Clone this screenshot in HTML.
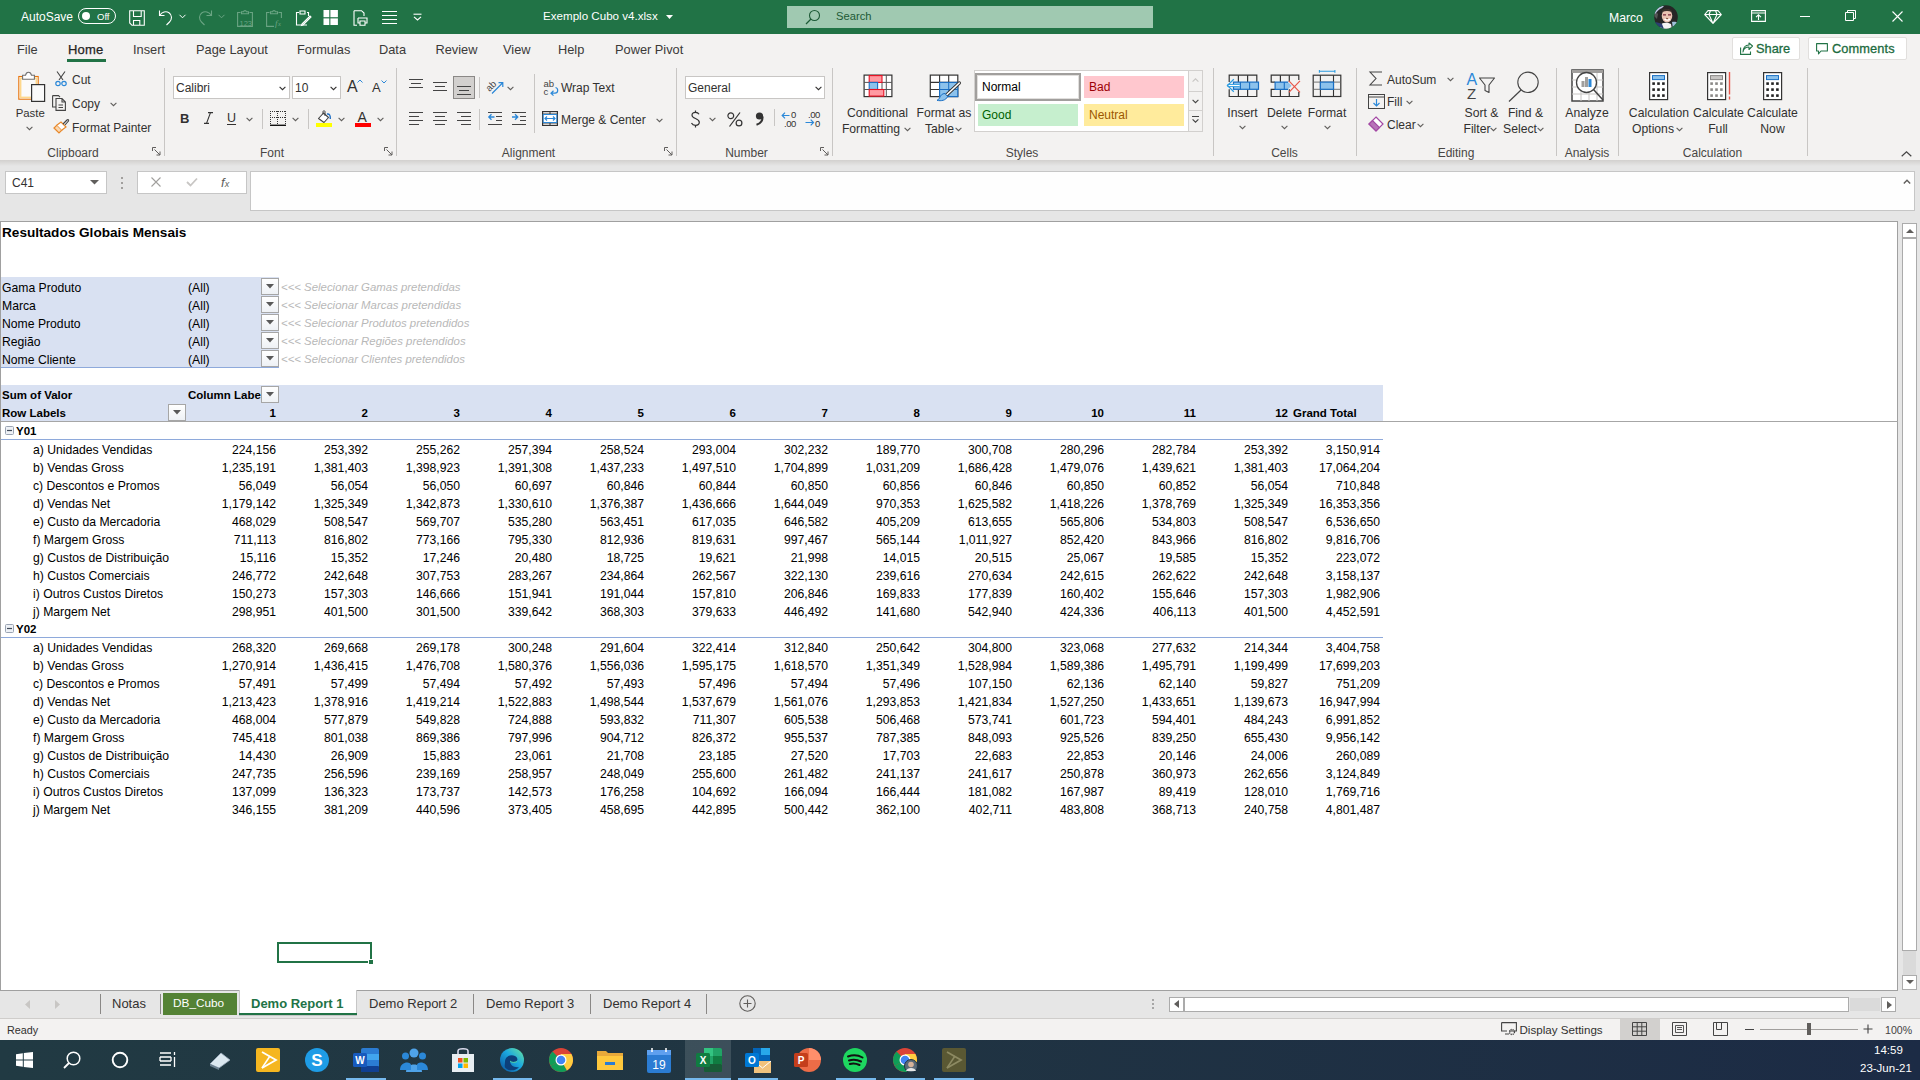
<!DOCTYPE html>
<html><head><meta charset="utf-8">
<style>
html,body{margin:0;padding:0;width:1920px;height:1080px;overflow:hidden;background:#fff;}
body{position:relative;font-family:"Liberation Sans", sans-serif;}
.t{position:absolute;white-space:nowrap;}
.b{position:absolute;box-sizing:border-box;}
svg.b{overflow:visible;}
</style></head><body>
<div class="b" style="left:0px;top:0px;width:1920px;height:34px;background:#217346"></div>
<div class="b" style="left:0px;top:34px;width:1920px;height:126px;background:#f3f2f1"></div>
<div class="b" style="left:0px;top:160px;width:1920px;height:61px;background:#e6e6e6"></div>
<div class="b" style="left:0px;top:160px;width:1920px;height:6px;background:linear-gradient(#d2d0ce,#e6e6e6)"></div>
<div class="b" style="left:0px;top:221px;width:1920px;height:771px;background:#e6e6e6"></div>
<div class="b" style="left:0px;top:221px;width:1898px;height:770px;background:#fff;border:1px solid #a0a0a0"></div>
<div class="b" style="left:0px;top:991px;width:1920px;height:27px;background:#e6e6e6"></div>
<div class="b" style="left:0px;top:1018px;width:1920px;height:22px;background:#f3f2f1;border-top:1px solid #cfcdcb"></div>
<div class="b" style="left:0px;top:1040px;width:1920px;height:40px;background:linear-gradient(90deg,#213a43 0%,#203442 45%,#1c2b45 100%)"></div>
<div class="t" style="left:21px;top:10.64px;font-size:12px;line-height:12px;color:#ffffff;font-weight:normal;font-style:normal;">AutoSave</div>
<div class="b" style="left:78px;top:8px;width:38px;height:16px;border:1.3px solid #fff;border-radius:8px"></div>
<div class="b" style="left:81.5px;top:12px;width:8px;height:8px;background:#fff;border-radius:50%"></div>
<div class="t" style="left:97px;top:11.76px;font-size:9.5px;line-height:9.5px;color:#ffffff;font-weight:normal;font-style:normal;">Off</div>
<svg class="b" style="left:129px;top:10px;" width="16" height="16" viewBox="0 0 16 16"><path d="M0.7 0.7H15.3V15.3H3L0.7 13Z M4.5 0.7V6.5H12.2V0.7 M4.5 15.3V10.5H10.8V15.3" fill="none" stroke="#fff" stroke-width="1.1"/></svg>
<svg class="b" style="left:158px;top:9px;" width="16" height="17" viewBox="0 0 16 17"><path d="M1.5 1.5V6.5H6.5 M1.8 6.3C4 3 8 1.8 11 3.8C14.5 6.2 14 10.5 11.5 13L8.5 16" fill="none" stroke="#fff" stroke-width="1.1"/></svg>
<svg class="b" style="left:179px;top:14px;" width="7" height="5" viewBox="0 0 7 5"><path d="M0.5 0.8L3.5 3.8L6.5 0.8" fill="none" stroke="#fff" stroke-width="1"/></svg>
<svg class="b" style="left:197px;top:9px;" width="16" height="17" viewBox="0 0 16 17"><path d="M14.5 1.5V6.5H9.5 M14.2 6.3C12 3 8 1.8 5 3.8C1.5 6.2 2 10.5 4.5 13L7.5 16" fill="none" stroke="#6aa483" stroke-width="1.1"/></svg>
<svg class="b" style="left:218px;top:14px;" width="7" height="5" viewBox="0 0 7 5"><path d="M0.5 0.8L3.5 3.8L6.5 0.8" fill="none" stroke="#6aa483" stroke-width="1"/></svg>
<svg class="b" style="left:237px;top:10px;" width="16" height="17" viewBox="0 0 16 17"><path d="M3.5 2.5H0.6V16.4H15.4V2.5H12.5" fill="none" stroke="#6aa483" stroke-width="1.1"/><path d="M4.5 3.8V1.8H6.5C6.8 0.2 9.2 0.2 9.5 1.8H11.5V3.8Z" fill="none" stroke="#6aa483" stroke-width="1.1"/><text x="2.5" y="15.5" font-size="7.5" fill="#6aa483" font-family="Liberation Sans">123</text></svg>
<svg class="b" style="left:266px;top:10px;" width="16" height="17" viewBox="0 0 16 17"><path d="M3.5 2.5H0.6V16.4H8" fill="none" stroke="#6aa483" stroke-width="1.1"/><path d="M12.5 2.5H15.4V8" fill="none" stroke="#6aa483" stroke-width="1.1"/><path d="M4.5 3.8V1.8H6.5C6.8 0.2 9.2 0.2 9.5 1.8H11.5V3.8Z" fill="none" stroke="#6aa483" stroke-width="1.1"/><text x="9" y="15.5" font-size="9" font-style="italic" fill="#6aa483" font-family="Liberation Serif">f</text><text x="12" y="16" font-size="6.5" font-style="italic" fill="#6aa483" font-family="Liberation Serif">x</text></svg>
<svg class="b" style="left:295px;top:10px;" width="16" height="16" viewBox="0 0 16 16"><path d="M4 2.5H1.5V15H12 M5 1H10V4H5Z M12 2.5H13.5V6" fill="none" stroke="#fff" stroke-width="1.1"/><path d="M7 14L15 6L16 7L8 15L6.5 15.5Z" fill="none" stroke="#fff" stroke-width="1.1"/></svg>
<svg class="b" style="left:322px;top:10px;" width="16" height="16" viewBox="0 0 16 16"><rect x="1.5" y="0" width="5.8" height="7.2" fill="#fff"/><rect x="8.4" y="0" width="7.5" height="7.2" fill="#fff"/><rect x="1.5" y="8.4" width="5.8" height="6.6" fill="#fff"/><rect x="8.4" y="8.4" width="7.5" height="6.6" fill="#fff"/></svg>
<svg class="b" style="left:353px;top:10px;" width="15" height="16" viewBox="0 0 15 16"><path d="M1 0.7H8.5L11 3V6 M1 0.7V15.3H4 M5 8H14V13H12 M5 8V13H7 M7 11H12V15.3H7Z" fill="none" stroke="#fff" stroke-width="1.1"/></svg>
<svg class="b" style="left:382px;top:11px;" width="15" height="14" viewBox="0 0 15 14"><path d="M0 0.5H15M0 4.5H15M0 8.5H15M0 12.5H15" stroke="#fff" stroke-width="1.1"/></svg>
<svg class="b" style="left:413px;top:13px;" width="9" height="8" viewBox="0 0 9 8"><path d="M0.5 1.2H8.5" stroke="#fff" stroke-width="1.1"/><path d="M1 3.8L4.5 7L8 3.8" fill="none" stroke="#fff" stroke-width="1.1"/></svg>
<div class="t" style="left:543px;top:10.18px;font-size:11.6px;line-height:11.6px;color:#ffffff;font-weight:normal;font-style:normal;">Exemplo Cubo v4.xlsx</div>
<svg class="b" style="left:666px;top:15px;" width="7" height="4" viewBox="0 0 7 4"><path d="M0 0H7L3.5 4Z" fill="#fff"/></svg>
<div class="b" style="left:787px;top:6px;width:366px;height:22px;background:#a0c9b1"></div>
<svg class="b" style="left:805px;top:9px;" width="16" height="16" viewBox="0 0 16 16"><circle cx="9.5" cy="6.5" r="5" fill="none" stroke="#1d5a36" stroke-width="1.1"/><path d="M6 10L1 15" stroke="#1d5a36" stroke-width="1.2"/></svg>
<div class="t" style="left:836px;top:11.32px;font-size:11.2px;line-height:11.2px;color:#1d5a36;font-weight:normal;font-style:normal;">Search</div>
<div class="t" style="left:1609px;top:11.67px;font-size:12.2px;line-height:12.2px;color:#ffffff;font-weight:normal;font-style:normal;">Marco</div>
<svg class="b" style="left:1654px;top:5px;" width="24" height="24" viewBox="0 0 24 24"><defs><clipPath id="av"><circle cx="12" cy="12" r="11.8"/></clipPath></defs><g clip-path="url(#av)"><rect width="24" height="24" fill="#262626"/><path d="M0 8C2 3 6 1 10 1L8 3C5 4 3 6 1 10Z" fill="#b9c6e2"/><path d="M0 11C1 8 3 7 4 9L3 14Z" fill="#555"/><ellipse cx="13" cy="10.8" rx="5.3" ry="6.6" fill="#ebc3b2"/><path d="M8 5.5C10 3.5 16 3.5 18 6L17.5 7C15 5.5 11 5.5 8.5 7Z" fill="#3a302b"/><path d="M9 9.8H12 M14 9.8H17" stroke="#7a2a3a" stroke-width="1.3"/><path d="M10.5 14C12 15.5 14.5 15.5 16 14" stroke="#fff" stroke-width="1.3" fill="none"/><path d="M12 13.3L14 13.6" stroke="#6a3a2a" stroke-width="0.8"/><path d="M5 24L8 18.5C10 17.5 14 17.5 17 19L18 24Z" fill="#f4f4f4"/><path d="M0 17C3 17 6 18 8 19L10 24H0Z" fill="#2c3e72"/><path d="M18 17C20 16.5 23 17 24 18V24H19Z" fill="#9fc2da"/></g></svg>
<svg class="b" style="left:1704px;top:10px;" width="18" height="14" viewBox="0 0 18 14"><path d="M4 0.6H14L17.3 4.5L9 13.4L0.7 4.5Z M0.7 4.5H17.3 M6.5 0.6L5 4.5L9 13.4L13 4.5L11.5 0.6" fill="none" stroke="#fff" stroke-width="1.1" stroke-linejoin="round"/></svg>
<svg class="b" style="left:1751px;top:10px;" width="15" height="12" viewBox="0 0 15 12"><path d="M0.6 0.6H14.4V11.4H0.6Z M0.6 3H14.4" fill="none" stroke="#fff" stroke-width="1.1"/><path d="M7.5 10V5 M5 7.2L7.5 4.8L10 7.2" fill="none" stroke="#fff" stroke-width="1.1"/></svg>
<div class="b" style="left:1800px;top:16px;width:10px;height:1px;background:#fff"></div>
<svg class="b" style="left:1845px;top:10px;" width="11" height="11" viewBox="0 0 11 11"><path d="M0.5 2.5H8.5V10.5H0.5Z M2.5 2.5V0.5H10.5V8.5H8.5" fill="none" stroke="#fff" stroke-width="1"/></svg>
<svg class="b" style="left:1892px;top:11px;" width="11" height="11" viewBox="0 0 11 11"><path d="M0.5 0.5L10.5 10.5M10.5 0.5L0.5 10.5" stroke="#fff" stroke-width="1.1"/></svg>
<div class="t" style="left:17px;top:43.76px;font-size:12.8px;line-height:12.8px;color:#3b3a39;font-weight:normal;font-style:normal;">File</div>
<div class="t" style="left:68px;top:42.90px;font-size:13px;line-height:13px;color:#252423;font-weight:normal;font-style:normal;-webkit-text-stroke:0.25px #252423;letter-spacing:0.2px;">Home</div>
<div class="t" style="left:133px;top:43.76px;font-size:12.8px;line-height:12.8px;color:#3b3a39;font-weight:normal;font-style:normal;">Insert</div>
<div class="t" style="left:196px;top:43.76px;font-size:12.8px;line-height:12.8px;color:#3b3a39;font-weight:normal;font-style:normal;">Page Layout</div>
<div class="t" style="left:297px;top:43.76px;font-size:12.8px;line-height:12.8px;color:#3b3a39;font-weight:normal;font-style:normal;">Formulas</div>
<div class="t" style="left:379px;top:43.76px;font-size:12.8px;line-height:12.8px;color:#3b3a39;font-weight:normal;font-style:normal;">Data</div>
<div class="t" style="left:435.5px;top:43.76px;font-size:12.8px;line-height:12.8px;color:#3b3a39;font-weight:normal;font-style:normal;">Review</div>
<div class="t" style="left:503px;top:43.76px;font-size:12.8px;line-height:12.8px;color:#3b3a39;font-weight:normal;font-style:normal;">View</div>
<div class="t" style="left:558px;top:43.76px;font-size:12.8px;line-height:12.8px;color:#3b3a39;font-weight:normal;font-style:normal;">Help</div>
<div class="t" style="left:615px;top:43.76px;font-size:12.8px;line-height:12.8px;color:#3b3a39;font-weight:normal;font-style:normal;">Power Pivot</div>
<div class="b" style="left:67px;top:59px;width:39px;height:3px;background:#217346"></div>
<div class="b" style="left:1732px;top:37px;width:68px;height:23px;background:#fff;border:1px solid #e1dfdd;border-radius:2px"></div>
<svg class="b" style="left:1740px;top:43px;" width="13" height="12" viewBox="0 0 13 12"><path d="M0.6 4.5V11.4H10.5V8.5" fill="none" stroke="#217346" stroke-width="1.1"/><path d="M3 9C3.5 5.5 6 4 9 4V6.5L12.5 3L9 0V2C5 2 3 5 3 9Z" fill="none" stroke="#217346" stroke-width="1.1" stroke-linejoin="round"/></svg>
<div class="t" style="left:1756px;top:42.96px;font-size:12.8px;line-height:12.8px;color:#1c6b40;font-weight:normal;font-style:normal;-webkit-text-stroke:0.3px #1c6b40;">Share</div>
<div class="b" style="left:1808px;top:37px;width:99px;height:23px;background:#fff;border:1px solid #e1dfdd;border-radius:2px"></div>
<svg class="b" style="left:1816px;top:43px;" width="12" height="12" viewBox="0 0 12 12"><path d="M0.6 0.6H11.4V8H5L2.5 10.8V8H0.6Z" fill="none" stroke="#217346" stroke-width="1.1" stroke-linejoin="round"/></svg>
<div class="t" style="left:1832px;top:42.96px;font-size:12.8px;line-height:12.8px;color:#1c6b40;font-weight:normal;font-style:normal;-webkit-text-stroke:0.3px #1c6b40;letter-spacing:0.1px;">Comments</div>
<div class="b" style="left:164px;top:68px;width:1px;height:88px;background:#c8c6c4"></div>
<div class="b" style="left:396px;top:68px;width:1px;height:88px;background:#c8c6c4"></div>
<div class="b" style="left:676px;top:68px;width:1px;height:88px;background:#c8c6c4"></div>
<div class="b" style="left:832px;top:68px;width:1px;height:88px;background:#c8c6c4"></div>
<div class="b" style="left:1213px;top:68px;width:1px;height:88px;background:#c8c6c4"></div>
<div class="b" style="left:1356px;top:68px;width:1px;height:88px;background:#c8c6c4"></div>
<div class="b" style="left:1556px;top:68px;width:1px;height:88px;background:#c8c6c4"></div>
<div class="b" style="left:1618px;top:68px;width:1px;height:88px;background:#c8c6c4"></div>
<div class="b" style="left:1807px;top:68px;width:1px;height:88px;background:#c8c6c4"></div>
<div class="t" style="left:-127px;width:400px;text-align:center;top:146.64px;font-size:12px;line-height:12px;color:#484644;font-weight:normal;">Clipboard</div>
<div class="t" style="left:72px;width:400px;text-align:center;top:146.64px;font-size:12px;line-height:12px;color:#484644;font-weight:normal;">Font</div>
<div class="t" style="left:328.5px;width:400px;text-align:center;top:146.64px;font-size:12px;line-height:12px;color:#484644;font-weight:normal;">Alignment</div>
<div class="t" style="left:546.5px;width:400px;text-align:center;top:146.64px;font-size:12px;line-height:12px;color:#484644;font-weight:normal;">Number</div>
<div class="t" style="left:822px;width:400px;text-align:center;top:146.64px;font-size:12px;line-height:12px;color:#484644;font-weight:normal;">Styles</div>
<div class="t" style="left:1084.5px;width:400px;text-align:center;top:146.64px;font-size:12px;line-height:12px;color:#484644;font-weight:normal;">Cells</div>
<div class="t" style="left:1256px;width:400px;text-align:center;top:146.64px;font-size:12px;line-height:12px;color:#484644;font-weight:normal;">Editing</div>
<div class="t" style="left:1387px;width:400px;text-align:center;top:146.64px;font-size:12px;line-height:12px;color:#484644;font-weight:normal;">Analysis</div>
<div class="t" style="left:1512.5px;width:400px;text-align:center;top:146.64px;font-size:12px;line-height:12px;color:#484644;font-weight:normal;">Calculation</div>
<svg class="b" style="left:152px;top:147px;" width="9" height="9" viewBox="0 0 9 9"><path d="M0.5 0.5H4 M0.5 0.5V4 M2.5 2.5L8 8 M8 4.5V8H4.5" fill="none" stroke="#605e5c" stroke-width="1"/></svg>
<svg class="b" style="left:384px;top:147px;" width="9" height="9" viewBox="0 0 9 9"><path d="M0.5 0.5H4 M0.5 0.5V4 M2.5 2.5L8 8 M8 4.5V8H4.5" fill="none" stroke="#605e5c" stroke-width="1"/></svg>
<svg class="b" style="left:664px;top:147px;" width="9" height="9" viewBox="0 0 9 9"><path d="M0.5 0.5H4 M0.5 0.5V4 M2.5 2.5L8 8 M8 4.5V8H4.5" fill="none" stroke="#605e5c" stroke-width="1"/></svg>
<svg class="b" style="left:820px;top:147px;" width="9" height="9" viewBox="0 0 9 9"><path d="M0.5 0.5H4 M0.5 0.5V4 M2.5 2.5L8 8 M8 4.5V8H4.5" fill="none" stroke="#605e5c" stroke-width="1"/></svg>
<svg class="b" style="left:0px;top:60px;" width="50" height="50" viewBox="0 0 50 50"><g transform="translate(0 -60)"><rect x="18.8" y="76.5" width="19.4" height="22.7" fill="#fbfaf9" stroke="#e8740c" stroke-width="1.1"/><rect x="20.6" y="78.3" width="15.8" height="19.1" fill="none" stroke="#fed88c" stroke-width="1.6"/><path d="M22.6 79.2V75.3H25.5C26 73 27 72.3 28.5 72.3C30 72.3 31 73 31.5 75.3H34.4V79.2Z" fill="#fff" stroke="#707070" stroke-width="1.1"/><rect x="31.6" y="84.6" width="13" height="16.8" fill="#fafafa" stroke="#333" stroke-width="1.2"/></g></svg>
<div class="t" style="left:15.7px;top:108.35px;font-size:11.4px;line-height:11.4px;color:#323130;font-weight:normal;font-style:normal;">Paste</div>
<svg class="b" style="left:25.5px;top:126px;" width="7" height="5" viewBox="0 0 7 5"><path d="M0.6 0.8L3.5 3.7L6.4 0.8" fill="none" stroke="#605e5c" stroke-width="1.1"/></svg>
<svg class="b" style="left:55px;top:71px;" width="12" height="16" viewBox="0 0 12 16"><path d="M2 0.5L8 9 M10 0.5L4 9" stroke="#444" stroke-width="1.1" fill="none"/><circle cx="3" cy="12.5" r="2.2" fill="none" stroke="#2b88d8" stroke-width="1.2"/><circle cx="9" cy="12.5" r="2.2" fill="none" stroke="#2b88d8" stroke-width="1.2"/></svg>
<div class="t" style="left:72px;top:74.34px;font-size:12px;line-height:12px;color:#323130;font-weight:normal;font-style:normal;">Cut</div>
<svg class="b" style="left:52px;top:95px;" width="14" height="16" viewBox="0 0 14 16"><path d="M0.6 0.6H6.5L8 2.2 M0.6 0.6V12H4" fill="none" stroke="#444" stroke-width="1.1"/><path d="M4 3.5H10L13.4 7V15.4H4Z M10 3.5V7H13.4 M6.5 10H11 M6.5 12.5H11" fill="none" stroke="#444" stroke-width="1.1"/></svg>
<div class="t" style="left:72px;top:98.34px;font-size:12px;line-height:12px;color:#323130;font-weight:normal;font-style:normal;">Copy</div>
<svg class="b" style="left:110px;top:102px;" width="7" height="5" viewBox="0 0 7 5"><path d="M0.6 0.8L3.5 3.7L6.4 0.8" fill="none" stroke="#605e5c" stroke-width="1.1"/></svg>
<svg class="b" style="left:53px;top:118px;" width="17" height="17" viewBox="0 0 17 17"><path d="M1 10L6 15L9 12L4 7Z" fill="#fbd8b0" stroke="#e8882a" stroke-width="1.2"/><path d="M4 7L8 4L13 9L9 12" fill="#fff" stroke="#e8882a" stroke-width="1.2"/><path d="M10 6L14 2C15 1 16 2 15.5 3L12 7" fill="none" stroke="#444" stroke-width="1.1"/></svg>
<div class="t" style="left:72px;top:122.14px;font-size:12px;line-height:12px;color:#323130;font-weight:normal;font-style:normal;">Format Painter</div>
<div class="b" style="left:173px;top:76px;width:117px;height:23px;background:#fff;border:1px solid #c8c6c4"></div>
<div class="t" style="left:176px;top:81.84px;font-size:12px;line-height:12px;color:#323130;font-weight:normal;font-style:normal;">Calibri</div>
<svg class="b" style="left:279px;top:86px;" width="7" height="5" viewBox="0 0 7 5"><path d="M0.6 0.8L3.5 3.7L6.4 0.8" fill="none" stroke="#323130" stroke-width="1.1"/></svg>
<div class="b" style="left:292px;top:76px;width:49px;height:23px;background:#fff;border:1px solid #c8c6c4"></div>
<div class="t" style="left:295px;top:81.84px;font-size:12px;line-height:12px;color:#323130;font-weight:normal;font-style:normal;">10</div>
<svg class="b" style="left:330px;top:86px;" width="7" height="5" viewBox="0 0 7 5"><path d="M0.6 0.8L3.5 3.7L6.4 0.8" fill="none" stroke="#323130" stroke-width="1.1"/></svg>
<div class="t" style="left:347px;top:79.46px;font-size:16px;line-height:16px;color:#323130;font-weight:normal;font-style:normal;">A</div>
<svg class="b" style="left:357px;top:79px;" width="6" height="4" viewBox="0 0 6 4"><path d="M0.5 3.5L3 1L5.5 3.5" fill="none" stroke="#2b88d8" stroke-width="1"/></svg>
<div class="t" style="left:372px;top:81.00px;font-size:13px;line-height:13px;color:#323130;font-weight:normal;font-style:normal;">A</div>
<svg class="b" style="left:381px;top:80px;" width="6" height="4" viewBox="0 0 6 4"><path d="M0.5 0.5L3 3L5.5 0.5" fill="none" stroke="#2b88d8" stroke-width="1"/></svg>
<div class="t" style="left:180px;top:112.00px;font-size:13px;line-height:13px;color:#323130;font-weight:bold;font-style:normal;">B</div>
<svg class="b" style="left:203px;top:112px;" width="10" height="12" viewBox="0 0 10 12"><path d="M5 0.6H10 M1 11.4H6 M7.5 0.6L3.5 11.4" fill="none" stroke="#333" stroke-width="1.1"/></svg>
<div class="t" style="left:227px;top:112.42px;font-size:12.5px;line-height:12.5px;color:#323130;font-weight:normal;font-style:normal;text-decoration:underline;text-underline-offset:1.5px;">U</div>
<svg class="b" style="left:246px;top:117px;" width="7" height="5" viewBox="0 0 7 5"><path d="M0.6 0.8L3.5 3.7L6.4 0.8" fill="none" stroke="#605e5c" stroke-width="1.1"/></svg>
<div class="b" style="left:262px;top:109px;width:1px;height:20px;background:#c8c6c4"></div>
<svg class="b" style="left:270px;top:111px;" width="16" height="16" viewBox="0 0 16 16"><g fill="#333"><rect x="0" y="0" width="1" height="1"/><rect x="0" y="6" width="1" height="1"/><rect x="2" y="0" width="1" height="1"/><rect x="2" y="6" width="1" height="1"/><rect x="4" y="0" width="1" height="1"/><rect x="4" y="6" width="1" height="1"/><rect x="6" y="0" width="1" height="1"/><rect x="6" y="6" width="1" height="1"/><rect x="8" y="0" width="1" height="1"/><rect x="8" y="6" width="1" height="1"/><rect x="10" y="0" width="1" height="1"/><rect x="10" y="6" width="1" height="1"/><rect x="12" y="0" width="1" height="1"/><rect x="12" y="6" width="1" height="1"/><rect x="14" y="0" width="1" height="1"/><rect x="14" y="6" width="1" height="1"/><rect x="0" y="0" width="1" height="1"/><rect x="15" y="0" width="1" height="1"/><rect x="7" y="0" width="1" height="1"/><rect x="0" y="2" width="1" height="1"/><rect x="15" y="2" width="1" height="1"/><rect x="7" y="2" width="1" height="1"/><rect x="0" y="4" width="1" height="1"/><rect x="15" y="4" width="1" height="1"/><rect x="7" y="4" width="1" height="1"/><rect x="0" y="6" width="1" height="1"/><rect x="15" y="6" width="1" height="1"/><rect x="7" y="6" width="1" height="1"/><rect x="0" y="8" width="1" height="1"/><rect x="15" y="8" width="1" height="1"/><rect x="7" y="8" width="1" height="1"/><rect x="0" y="10" width="1" height="1"/><rect x="15" y="10" width="1" height="1"/><rect x="7" y="10" width="1" height="1"/><rect x="0" y="12" width="1" height="1"/><rect x="15" y="12" width="1" height="1"/><rect x="7" y="12" width="1" height="1"/></g><rect x="0" y="13.6" width="16" height="1.4" fill="#111"/></svg>
<svg class="b" style="left:292px;top:117px;" width="7" height="5" viewBox="0 0 7 5"><path d="M0.6 0.8L3.5 3.7L6.4 0.8" fill="none" stroke="#605e5c" stroke-width="1.1"/></svg>
<div class="b" style="left:308px;top:109px;width:1px;height:20px;background:#c8c6c4"></div>
<svg class="b" style="left:316px;top:110px;" width="17" height="18" viewBox="0 0 17 18"><path d="M2.5 8.5L7.5 3L12.5 7.5L8 12.5Z" fill="#fff" stroke="#444" stroke-width="1.1" stroke-linejoin="round"/><path d="M7 4.5V1.5C7 0.5 9 0.5 9 1.5V6" fill="none" stroke="#444" stroke-width="1"/><path d="M11 4C13.5 3.5 14.5 5.5 14.3 9" fill="none" stroke="#1f6fc5" stroke-width="1.4"/><rect x="0" y="13" width="16" height="4" fill="#ffff00"/></svg>
<svg class="b" style="left:338px;top:117px;" width="7" height="5" viewBox="0 0 7 5"><path d="M0.6 0.8L3.5 3.7L6.4 0.8" fill="none" stroke="#605e5c" stroke-width="1.1"/></svg>
<div class="t" style="left:357.5px;top:110.45px;font-size:14px;line-height:14px;color:#323130;font-weight:normal;font-style:normal;">A</div>
<div class="b" style="left:355px;top:123px;width:16px;height:4px;background:#ff0000"></div>
<svg class="b" style="left:377px;top:117px;" width="7" height="5" viewBox="0 0 7 5"><path d="M0.6 0.8L3.5 3.7L6.4 0.8" fill="none" stroke="#605e5c" stroke-width="1.1"/></svg>
<svg class="b" style="left:0px;top:0px;" width="1" height="1" viewBox="0 0 1 1"><path d="M409.0 79.5H423.0M411.0 83.5H421.0M409.0 87.5H423.0" stroke="#444" stroke-width="1.1"/></svg>
<svg class="b" style="left:0px;top:0px;" width="1" height="1" viewBox="0 0 1 1"><path d="M433.0 82.5H447.0M435.0 86.5H445.0M433.0 90.5H447.0" stroke="#444" stroke-width="1.1"/></svg>
<div class="b" style="left:453px;top:76px;width:22px;height:23px;background:#d2d0ce;border:1px solid #8a8886"></div>
<svg class="b" style="left:0px;top:0px;" width="1" height="1" viewBox="0 0 1 1"><path d="M457.0 86.5H471.0M459.0 90.5H469.0M457.0 94.5H471.0" stroke="#444" stroke-width="1.1"/></svg>
<svg class="b" style="left:486px;top:78px;" width="20" height="17" viewBox="0 0 20 17"><text x="0" y="0" font-size="9.5" transform="translate(3.5 14) rotate(-45)" fill="#444" font-family="Liberation Sans">ab</text><path d="M6 15.5L16.5 5 M12.5 4.7H16.8V9" stroke="#2b88d8" stroke-width="1.2" fill="none"/></svg>
<svg class="b" style="left:507px;top:86px;" width="7" height="5" viewBox="0 0 7 5"><path d="M0.6 0.8L3.5 3.7L6.4 0.8" fill="none" stroke="#605e5c" stroke-width="1.1"/></svg>
<div class="b" style="left:479px;top:77px;width:1px;height:21px;background:#c8c6c4"></div>
<svg class="b" style="left:0px;top:0px;" width="1" height="1" viewBox="0 0 1 1"><path d="M409 112.5H423M409 116.5H419M409 120.5H423M409 124.5H419" stroke="#444" stroke-width="1.1"/></svg>
<svg class="b" style="left:0px;top:0px;" width="1" height="1" viewBox="0 0 1 1"><path d="M433.0 112.5H447.0M435.0 116.5H445.0M433.0 120.5H447.0M435.0 124.5H445.0" stroke="#444" stroke-width="1.1"/></svg>
<svg class="b" style="left:0px;top:0px;" width="1" height="1" viewBox="0 0 1 1"><path d="M457 112.5H471M461 116.5H471M457 120.5H471M461 124.5H471" stroke="#444" stroke-width="1.1"/></svg>
<svg class="b" style="left:0px;top:0px;" width="1" height="1" viewBox="0 0 1 1"><path d="M488 112.5H502M496 116.5H502M496 120.5H502M488 124.5H502" stroke="#444" stroke-width="1.1"/></svg>
<svg class="b" style="left:488px;top:113px;" width="7" height="8" viewBox="0 0 7 8"><path d="M6.5 4H1 M3.5 1.2L0.8 4L3.5 6.8" stroke="#2b88d8" stroke-width="1.3" fill="none"/></svg>
<svg class="b" style="left:0px;top:0px;" width="1" height="1" viewBox="0 0 1 1"><path d="M512 112.5H526M520 116.5H526M520 120.5H526M512 124.5H526" stroke="#444" stroke-width="1.1"/></svg>
<svg class="b" style="left:512px;top:113px;" width="7" height="8" viewBox="0 0 7 8"><path d="M0 4H5.5 M3 1.2L5.8 4L3 6.8" stroke="#2b88d8" stroke-width="1.3" fill="none"/></svg>
<div class="b" style="left:479px;top:109px;width:1px;height:21px;background:#c8c6c4"></div>
<div class="b" style="left:534px;top:74px;width:1px;height:59px;background:#c8c6c4"></div>
<svg class="b" style="left:543px;top:79px;" width="16" height="17" viewBox="0 0 16 17"><text x="0.5" y="8" font-size="9.5" fill="#444" font-family="Liberation Sans">ab</text><text x="0.5" y="15.5" font-size="9.5" fill="#444" font-family="Liberation Sans">c</text><path d="M12.5 8.5C15.5 9 15.5 14 12 14.2H8.2 M10.5 11.8L8 14.2L10.5 16.6" stroke="#2b88d8" stroke-width="1.2" fill="none"/></svg>
<div class="t" style="left:561px;top:82.14px;font-size:12px;line-height:12px;color:#323130;font-weight:normal;font-style:normal;">Wrap Text</div>
<svg class="b" style="left:542px;top:111px;" width="16" height="15" viewBox="0 0 16 15"><rect x="0.6" y="0.6" width="14.8" height="13.8" fill="#fff" stroke="#333" stroke-width="1.2"/><path d="M8 0.6V3 M8 12V14.4 M0.6 3H15.4 M0.6 12H15.4" stroke="#333" stroke-width="1"/><rect x="1.2" y="3.5" width="13.6" height="8" fill="none" stroke="#2b88d8" stroke-width="1"/><path d="M3 7.5H13 M5 5.5L3 7.5L5 9.5 M11 5.5L13 7.5L11 9.5" stroke="#2b88d8" stroke-width="1.2" fill="none"/></svg>
<div class="t" style="left:561px;top:114.24px;font-size:12px;line-height:12px;color:#323130;font-weight:normal;font-style:normal;">Merge &amp; Center</div>
<svg class="b" style="left:656px;top:118px;" width="7" height="5" viewBox="0 0 7 5"><path d="M0.6 0.8L3.5 3.7L6.4 0.8" fill="none" stroke="#605e5c" stroke-width="1.1"/></svg>
<div class="b" style="left:685px;top:76px;width:140px;height:23px;background:#fff;border:1px solid #c8c6c4"></div>
<div class="t" style="left:688px;top:81.84px;font-size:12px;line-height:12px;color:#323130;font-weight:normal;font-style:normal;">General</div>
<svg class="b" style="left:815px;top:86px;" width="7" height="5" viewBox="0 0 7 5"><path d="M0.6 0.8L3.5 3.7L6.4 0.8" fill="none" stroke="#323130" stroke-width="1.1"/></svg>
<svg class="b" style="left:690px;top:110px;" width="11" height="18" viewBox="0 0 11 18"><path d="M9 4.2C8.3 2.8 7 2.3 5.5 2.3C3.3 2.3 2 3.5 2 5.2C2 9 9.3 8 9.3 12.3C9.3 14.3 7.8 15.3 5.5 15.3C3.5 15.3 2.2 14.5 1.5 13" fill="none" stroke="#333" stroke-width="1.2"/><path d="M5.5 0.5V2.3 M5.5 15.3V17.5" stroke="#333" stroke-width="1.2"/></svg>
<svg class="b" style="left:709px;top:117px;" width="7" height="5" viewBox="0 0 7 5"><path d="M0.6 0.8L3.5 3.7L6.4 0.8" fill="none" stroke="#605e5c" stroke-width="1.1"/></svg>
<svg class="b" style="left:727px;top:112px;" width="16" height="15" viewBox="0 0 16 15"><circle cx="3.8" cy="3.8" r="2.9" fill="none" stroke="#333" stroke-width="1.2"/><circle cx="12" cy="11" r="2.9" fill="none" stroke="#333" stroke-width="1.2"/><path d="M13 0.5L2.5 14.5" stroke="#333" stroke-width="1.2"/></svg>
<svg class="b" style="left:755px;top:112px;" width="9" height="14" viewBox="0 0 9 14"><circle cx="4.5" cy="4" r="3.6" fill="#333"/><path d="M7.6 4.5C7.8 8.5 5.5 11.5 1.5 12.8" stroke="#333" stroke-width="2" fill="none"/></svg>
<div class="b" style="left:774px;top:109px;width:1px;height:17px;background:#c8c6c4"></div>
<svg class="b" style="left:780px;top:109px;" width="20" height="20" viewBox="0 0 20 20"><path d="M9.5 6.5H2.2 M5 3.7L2.2 6.5L5 9.3" stroke="#2b88d8" stroke-width="1.2" fill="none"/><text x="11" y="9" font-size="9.5" fill="#333" font-family="Liberation Sans">0</text><text x="4" y="17.5" font-size="9.5" fill="#333" font-family="Liberation Sans" letter-spacing="-0.5">.00</text></svg>
<svg class="b" style="left:804px;top:109px;" width="20" height="20" viewBox="0 0 20 20"><text x="4" y="9" font-size="9.5" fill="#333" font-family="Liberation Sans" letter-spacing="-0.5">.00</text><path d="M1.5 13.5H9.5 M6.7 10.7L9.5 13.5L6.7 16.3" stroke="#2b88d8" stroke-width="1.2" fill="none"/><text x="11" y="17.5" font-size="9.5" fill="#333" font-family="Liberation Sans">0</text></svg>
<svg class="b" style="left:840px;top:66px;" width="30" height="30" viewBox="0 0 30 30"><g transform="translate(-840 -66)"><rect x="864.1" y="75.1" width="27.8" height="21.5" fill="#fff" stroke="#333" stroke-width="1.2"/><path d="M864.1 82.4H891.9 M864.1 89.5H891.9 M886.3 75.1V96.6 M882 82.4V89.5" stroke="#555" stroke-width="1"/><rect x="869.2" y="75.6" width="12.8" height="6.8" fill="#ff9aa2" stroke="#e81123" stroke-width="1.1"/><rect x="869.2" y="82.4" width="8.4" height="7.1" fill="#8cc2ec" stroke="#1a6fc4" stroke-width="1.1"/><rect x="869.2" y="89.5" width="14.6" height="6.6" fill="#ff9aa2" stroke="#e81123" stroke-width="1.1"/><rect x="930.3" y="75.1" width="27.5" height="21.5" fill="#fff" stroke="#333" stroke-width="1.2"/><path d="M930.3 82.4H957.8 M930.3 89.5H957.8 M939.6 75.1V96.6 M948.7 75.1V96.6" stroke="#333" stroke-width="1.1"/><rect x="939.6" y="82.4" width="18.2" height="14.2" fill="#8cc2ec" stroke="#1a6fc4" stroke-width="1.1"/><path d="M948.7 82.4V96.6 M939.6 89.5H957.8" stroke="#1a6fc4" stroke-width="1"/><path d="M959.3 83L946.5 95" stroke="#333" stroke-width="3.4" stroke-linecap="round"/><path d="M959.3 83L946.5 95" stroke="#fff" stroke-width="1.6" stroke-linecap="round"/><path d="M945 93.5C942 93.5 940.5 95.5 939.5 98C939 99.2 938 100 937 100.3C941 101.3 946 100.5 947.5 96.5Z" fill="#8cc2ec" stroke="#1a6fc4" stroke-width="1"/></g></svg>
<div class="t" style="left:677.5px;width:400px;text-align:center;top:106.67px;font-size:12.2px;line-height:12.2px;color:#323130;font-weight:normal;">Conditional</div>
<div class="t" style="left:671px;width:400px;text-align:center;top:122.67px;font-size:12.2px;line-height:12.2px;color:#323130;font-weight:normal;">Formatting</div>
<svg class="b" style="left:903.5px;top:127px;" width="7" height="5" viewBox="0 0 7 5"><path d="M0.6 0.8L3.5 3.7L6.4 0.8" fill="none" stroke="#605e5c" stroke-width="1.1"/></svg>
<div class="t" style="left:744px;width:400px;text-align:center;top:106.67px;font-size:12.2px;line-height:12.2px;color:#323130;font-weight:normal;">Format as</div>
<div class="t" style="left:739.5px;width:400px;text-align:center;top:122.67px;font-size:12.2px;line-height:12.2px;color:#323130;font-weight:normal;">Table</div>
<svg class="b" style="left:955px;top:127px;" width="7" height="5" viewBox="0 0 7 5"><path d="M0.6 0.8L3.5 3.7L6.4 0.8" fill="none" stroke="#605e5c" stroke-width="1.1"/></svg>
<div class="b" style="left:974px;top:70px;width:215px;height:62px;background:#fff;border:1px solid #d2d0ce"></div>
<div class="b" style="left:975px;top:73px;width:106px;height:28px;border:2px solid #a19f9d;background:#fff"></div>
<div class="b" style="left:977px;top:75px;width:102px;height:24px;border:1px solid #e1dfdd"></div>
<div class="t" style="left:982px;top:80.84px;font-size:12px;line-height:12px;color:#000;font-weight:normal;font-style:normal;">Normal</div>
<div class="b" style="left:1084px;top:76px;width:100px;height:22px;background:#ffc7ce"></div>
<div class="t" style="left:1089px;top:80.84px;font-size:12px;line-height:12px;color:#9c0006;font-weight:normal;font-style:normal;">Bad</div>
<div class="b" style="left:978px;top:104px;width:100px;height:22px;background:#c6efce"></div>
<div class="t" style="left:982px;top:109.34px;font-size:12px;line-height:12px;color:#006100;font-weight:normal;font-style:normal;">Good</div>
<div class="b" style="left:1084px;top:104px;width:100px;height:22px;background:#ffeb9c"></div>
<div class="t" style="left:1089px;top:109.34px;font-size:12px;line-height:12px;color:#9c5700;font-weight:normal;font-style:normal;">Neutral</div>
<div class="b" style="left:1188px;top:70px;width:15px;height:62px;background:#f3f2f1;border:1px solid #d2d0ce"></div>
<div class="b" style="left:1188px;top:91px;width:15px;height:1px;background:#d2d0ce"></div>
<div class="b" style="left:1188px;top:110px;width:15px;height:1px;background:#d2d0ce"></div>
<svg class="b" style="left:1192px;top:78px;" width="7" height="5" viewBox="0 0 7 5"><path d="M0.6 3.7L3.5 0.8L6.4 3.7" fill="none" stroke="#c8c6c4" stroke-width="1.1"/></svg>
<svg class="b" style="left:1192px;top:99px;" width="7" height="5" viewBox="0 0 7 5"><path d="M0.6 0.8L3.5 3.7L6.4 0.8" fill="none" stroke="#444" stroke-width="1.1"/></svg>
<svg class="b" style="left:1192px;top:116px;" width="7" height="8" viewBox="0 0 7 8"><path d="M0 0.5H7" stroke="#444" stroke-width="1"/><path d="M0.6 3.3L3.5 6.2L6.4 3.3" fill="none" stroke="#444" stroke-width="1.1"/></svg>
<svg class="b" style="left:1222px;top:0px;" width="130" height="100" viewBox="0 0 130 100"><g fill="none" stroke="#333" stroke-width="1.2"><path d="M7.2 82.1V75.2H34.8V96.5H7.2V89.3"/><path d="M16.4 75.2V82 M25.6 75.2V82 M16.4 89.3V96.5 M25.6 89.3V96.5"/></g><rect x="11.5" y="82.1" width="25" height="7.2" fill="#8cc2ec" stroke="#1a6fc4" stroke-width="1.2"/><path d="M18.4 82.1V89.3 M27.6 82.1V89.3" stroke="#1a6fc4" stroke-width="1.1"/><path d="M6 85.5H17.5" stroke="#fff" stroke-width="3"/><path d="M5.5 84.5H17.8 M5.5 86.5H17.8" stroke="#2b9be0" stroke-width="0.9"/><path d="M11.8 79.2L5.4 85.5L11.8 91.8" fill="none" stroke="#2b9be0" stroke-width="1.2"/><g fill="none" stroke="#333" stroke-width="1.2"><path d="M53 82.1H49.2V75.2H76.8V80 M49.2 82.1 M53 89.3H49.2V96.5H76.8V92"/><path d="M58.4 75.2V82 M67.3 75.2V82 M58.4 89.3V96.5 M67.3 89.3V96.5"/></g><path d="M53.1 82.1H66L69.6 85.7L66 89.3H53.1Z" fill="#8cc2ec"/><path d="M66 82.1H53.1V89.3H66" fill="none" stroke="#1a6fc4" stroke-width="1.2"/><path d="M62.3 82.1V89.3" stroke="#1a6fc4" stroke-width="1.1"/><path d="M66.9 80.8L78 92.3 M78 80.8L66.9 92.3" stroke="#e8574a" stroke-width="1.2"/><rect x="91.2" y="75.2" width="27.6" height="21.3" fill="none" stroke="#333" stroke-width="1.2"/><path d="M98.4 75.2V96.5 M111.5 75.2V96.5" stroke="#333" stroke-width="1.1"/><path d="M91.2 82.1H118.8 M91.2 89.3H118.8" stroke="#666" stroke-width="0.9"/><rect x="98.4" y="82.1" width="13.1" height="7.2" fill="#8cc2ec" stroke="#1a6fc4" stroke-width="1.2"/><path d="M97.4 71.3H112.9 M97.4 70V72.8 M112.9 70V72.8" stroke="#2b9be0" stroke-width="1.1"/></svg>
<div class="t" style="left:1042.5px;width:400px;text-align:center;top:106.67px;font-size:12.2px;line-height:12.2px;color:#323130;font-weight:normal;">Insert</div>
<svg class="b" style="left:1239px;top:125px;" width="7" height="5" viewBox="0 0 7 5"><path d="M0.6 0.8L3.5 3.7L6.4 0.8" fill="none" stroke="#605e5c" stroke-width="1.1"/></svg>
<div class="t" style="left:1084.5px;width:400px;text-align:center;top:106.67px;font-size:12.2px;line-height:12.2px;color:#323130;font-weight:normal;">Delete</div>
<svg class="b" style="left:1281px;top:125px;" width="7" height="5" viewBox="0 0 7 5"><path d="M0.6 0.8L3.5 3.7L6.4 0.8" fill="none" stroke="#605e5c" stroke-width="1.1"/></svg>
<div class="t" style="left:1127px;width:400px;text-align:center;top:106.67px;font-size:12.2px;line-height:12.2px;color:#323130;font-weight:normal;">Format</div>
<svg class="b" style="left:1323.5px;top:125px;" width="7" height="5" viewBox="0 0 7 5"><path d="M0.6 0.8L3.5 3.7L6.4 0.8" fill="none" stroke="#605e5c" stroke-width="1.1"/></svg>
<svg class="b" style="left:1369px;top:71px;" width="14" height="15" viewBox="0 0 14 15"><path d="M13 1H1L7 7.5L1 14H13" fill="none" stroke="#444" stroke-width="1.1"/></svg>
<div class="t" style="left:1387px;top:73.84px;font-size:12px;line-height:12px;color:#323130;font-weight:normal;font-style:normal;">AutoSum</div>
<svg class="b" style="left:1447px;top:77px;" width="7" height="5" viewBox="0 0 7 5"><path d="M0.6 0.8L3.5 3.7L6.4 0.8" fill="none" stroke="#605e5c" stroke-width="1.1"/></svg>
<svg class="b" style="left:1368px;top:94px;" width="17" height="15" viewBox="0 0 17 15"><rect x="0.5" y="0.5" width="16" height="14" fill="none" stroke="#444" stroke-width="1"/><path d="M0.5 3H16.5" stroke="#444"/><path d="M8.5 5V12 M5.5 9L8.5 12L11.5 9" stroke="#2b88d8" stroke-width="1.2" fill="none"/></svg>
<div class="t" style="left:1387px;top:96.34px;font-size:12px;line-height:12px;color:#323130;font-weight:normal;font-style:normal;">Fill</div>
<svg class="b" style="left:1406px;top:100px;" width="7" height="5" viewBox="0 0 7 5"><path d="M0.6 0.8L3.5 3.7L6.4 0.8" fill="none" stroke="#605e5c" stroke-width="1.1"/></svg>
<svg class="b" style="left:1368px;top:116px;" width="16" height="16" viewBox="0 0 16 16"><path d="M8 1L15 8L8 15L1 8Z" fill="#fff" stroke="#a349a4" stroke-width="1.2"/><path d="M1 8L8 15L11.5 11.5L4.5 4.5Z" fill="#b774b8" stroke="#a349a4" stroke-width="1.1"/></svg>
<div class="t" style="left:1387px;top:119.34px;font-size:12px;line-height:12px;color:#323130;font-weight:normal;font-style:normal;">Clear</div>
<svg class="b" style="left:1417px;top:123px;" width="7" height="5" viewBox="0 0 7 5"><path d="M0.6 0.8L3.5 3.7L6.4 0.8" fill="none" stroke="#605e5c" stroke-width="1.1"/></svg>
<svg class="b" style="left:1466px;top:72px;" width="32" height="30" viewBox="0 0 32 30"><text x="0.5" y="13" font-size="16" fill="#2b88d8" font-family="Liberation Sans">A</text><text x="1" y="27" font-size="15" fill="#444" font-family="Liberation Sans">Z</text><path d="M13.5 6H28.5L23 13V20.5L19 18.5V13Z" fill="none" stroke="#444" stroke-width="1.1" stroke-linejoin="round"/></svg>
<div class="t" style="left:1281.5px;width:400px;text-align:center;top:106.67px;font-size:12.2px;line-height:12.2px;color:#323130;font-weight:normal;">Sort &amp;</div>
<div class="t" style="left:1277px;width:400px;text-align:center;top:122.67px;font-size:12.2px;line-height:12.2px;color:#323130;font-weight:normal;">Filter</div>
<svg class="b" style="left:1490px;top:127px;" width="7" height="5" viewBox="0 0 7 5"><path d="M0.6 0.8L3.5 3.7L6.4 0.8" fill="none" stroke="#605e5c" stroke-width="1.1"/></svg>
<svg class="b" style="left:1508px;top:72px;" width="32" height="30" viewBox="0 0 32 30"><circle cx="20" cy="10.3" r="10.2" fill="none" stroke="#444" stroke-width="1.1"/><path d="M13 18L1 29.5" stroke="#444" stroke-width="1.2"/></svg>
<div class="t" style="left:1325.5px;width:400px;text-align:center;top:106.67px;font-size:12.2px;line-height:12.2px;color:#323130;font-weight:normal;">Find &amp;</div>
<div class="t" style="left:1320px;width:400px;text-align:center;top:122.67px;font-size:12.2px;line-height:12.2px;color:#323130;font-weight:normal;">Select</div>
<svg class="b" style="left:1537px;top:127px;" width="7" height="5" viewBox="0 0 7 5"><path d="M0.6 0.8L3.5 3.7L6.4 0.8" fill="none" stroke="#605e5c" stroke-width="1.1"/></svg>
<svg class="b" style="left:1571px;top:69px;" width="34" height="34" viewBox="0 0 34 34"><rect x="1" y="1" width="31" height="31" fill="#fff" stroke="#444" stroke-width="1.5"/><rect x="1" y="1" width="31" height="3" fill="#a19f9d"/><g stroke="#c8c6c4" stroke-width="1"><path d="M1 11H32 M1 18H32 M1 25H32 M10 4V32 M18 4V32 M26 4V32"/></g><circle cx="15.5" cy="13.5" r="10" fill="#fff" stroke="#444" stroke-width="1.3"/><rect x="10.5" y="12" width="3" height="6" fill="#a19f9d"/><rect x="14" y="8" width="3" height="10" fill="#a19f9d"/><rect x="17.5" y="10" width="3" height="8" fill="#2b88d8"/><path d="M22.5 20.5L32 31" stroke="#444" stroke-width="1.5"/></svg>
<div class="t" style="left:1387px;width:400px;text-align:center;top:106.67px;font-size:12.2px;line-height:12.2px;color:#323130;font-weight:normal;">Analyze</div>
<div class="t" style="left:1387px;width:400px;text-align:center;top:122.67px;font-size:12.2px;line-height:12.2px;color:#323130;font-weight:normal;">Data</div>
<svg class="b" style="left:1649px;top:72px;" width="24" height="29" viewBox="0 0 24 29"><rect x="0.6" y="0.6" width="18" height="27" fill="#fff" stroke="#333" stroke-width="1.2"/><rect x="3.5" y="3.6" width="12" height="4" fill="#8cc2ec" stroke="#1a6fc4" stroke-width="1"/><rect x="3.3" y="10.3" width="2.6" height="2.6" fill="#222"/><rect x="8.2" y="10.3" width="2.6" height="2.6" fill="#222"/><rect x="13.1" y="10.3" width="2.6" height="2.6" fill="#222"/><rect x="3.3" y="16.3" width="2.6" height="2.6" fill="#222"/><rect x="8.2" y="16.3" width="2.6" height="2.6" fill="#222"/><rect x="13.1" y="16.3" width="2.6" height="2.6" fill="#222"/><rect x="3.3" y="22.3" width="2.6" height="2.6" fill="#222"/><rect x="8.2" y="22.3" width="2.6" height="2.6" fill="#222"/><rect x="13.1" y="22.3" width="2.6" height="2.6" fill="#222"/></svg>
<div class="t" style="left:1459px;width:400px;text-align:center;top:106.67px;font-size:12.2px;line-height:12.2px;color:#323130;font-weight:normal;">Calculation</div>
<div class="t" style="left:1453px;width:400px;text-align:center;top:122.67px;font-size:12.2px;line-height:12.2px;color:#323130;font-weight:normal;">Options</div>
<svg class="b" style="left:1676px;top:127px;" width="7" height="5" viewBox="0 0 7 5"><path d="M0.6 0.8L3.5 3.7L6.4 0.8" fill="none" stroke="#605e5c" stroke-width="1.1"/></svg>
<svg class="b" style="left:1707px;top:72px;" width="24" height="29" viewBox="0 0 24 29"><rect x="0.6" y="0.6" width="18" height="27" fill="#fff" stroke="#333" stroke-width="1.2"/><rect x="3.5" y="3.6" width="12" height="4" fill="#c8c6c4" stroke="#8a8886" stroke-width="1"/><rect x="3.3" y="10.3" width="2.6" height="2.6" fill="#8a8886"/><rect x="8.2" y="10.3" width="2.6" height="2.6" fill="#8a8886"/><rect x="13.1" y="10.3" width="2.6" height="2.6" fill="#8a8886"/><rect x="3.3" y="16.3" width="2.6" height="2.6" fill="#8a8886"/><rect x="8.2" y="16.3" width="2.6" height="2.6" fill="#8a8886"/><rect x="13.1" y="16.3" width="2.6" height="2.6" fill="#8a8886"/><rect x="3.3" y="22.3" width="2.6" height="2.6" fill="#8a8886"/><rect x="8.2" y="22.3" width="2.6" height="2.6" fill="#8a8886"/><rect x="13.1" y="22.3" width="2.6" height="2.6" fill="#8a8886"/><path d="M22.5 0V22.5 M22.5 24.5V27.5" stroke="#e8574a" stroke-width="1.4"/></svg>
<div class="t" style="left:1518.5px;width:400px;text-align:center;top:106.67px;font-size:12.2px;line-height:12.2px;color:#323130;font-weight:normal;">Calculate</div>
<div class="t" style="left:1518px;width:400px;text-align:center;top:122.67px;font-size:12.2px;line-height:12.2px;color:#323130;font-weight:normal;">Full</div>
<svg class="b" style="left:1763px;top:72px;" width="24" height="29" viewBox="0 0 24 29"><rect x="0.6" y="0.6" width="18" height="27" fill="#fff" stroke="#333" stroke-width="1.2"/><rect x="3.5" y="3.6" width="12" height="4" fill="#8cc2ec" stroke="#1a6fc4" stroke-width="1"/><rect x="3.3" y="10.3" width="2.6" height="2.6" fill="#222"/><rect x="8.2" y="10.3" width="2.6" height="2.6" fill="#222"/><rect x="13.1" y="10.3" width="2.6" height="2.6" fill="#222"/><rect x="3.3" y="16.3" width="2.6" height="2.6" fill="#222"/><rect x="8.2" y="16.3" width="2.6" height="2.6" fill="#222"/><rect x="13.1" y="16.3" width="2.6" height="2.6" fill="#222"/><rect x="3.3" y="22.3" width="2.6" height="2.6" fill="#222"/><rect x="8.2" y="22.3" width="2.6" height="2.6" fill="#222"/><rect x="13.1" y="22.3" width="2.6" height="2.6" fill="#222"/></svg>
<div class="t" style="left:1572.5px;width:400px;text-align:center;top:106.67px;font-size:12.2px;line-height:12.2px;color:#323130;font-weight:normal;">Calculate</div>
<div class="t" style="left:1572.5px;width:400px;text-align:center;top:122.67px;font-size:12.2px;line-height:12.2px;color:#323130;font-weight:normal;">Now</div>
<svg class="b" style="left:1901px;top:151px;" width="11" height="6" viewBox="0 0 11 6"><path d="M0.7 5.3L5.5 0.8L10.3 5.3" fill="none" stroke="#444" stroke-width="1.2"/></svg>
<div class="b" style="left:5px;top:171px;width:102px;height:23px;background:#fff;border:1px solid #c6c6c6"></div>
<div class="t" style="left:12px;top:176.84px;font-size:12px;line-height:12px;color:#323130;font-weight:normal;font-style:normal;">C41</div>
<svg class="b" style="left:90px;top:180px;" width="9" height="5" viewBox="0 0 9 5"><path d="M0 0H9L4.5 4.5Z" fill="#605e5c"/></svg>
<div class="b" style="left:121px;top:177px;width:2px;height:2px;background:#a19f9d"></div>
<div class="b" style="left:121px;top:182px;width:2px;height:2px;background:#a19f9d"></div>
<div class="b" style="left:121px;top:187px;width:2px;height:2px;background:#a19f9d"></div>
<div class="b" style="left:137px;top:171px;width:110px;height:23px;background:#fff;border:1px solid #c6c6c6"></div>
<svg class="b" style="left:151px;top:177px;" width="10" height="10" viewBox="0 0 10 10"><path d="M0.5 0.5L9.5 9.5M9.5 0.5L0.5 9.5" stroke="#a19f9d" stroke-width="1.1"/></svg>
<svg class="b" style="left:186px;top:177px;" width="12" height="10" viewBox="0 0 12 10"><path d="M1 5L4.5 8.5L11 1.5" stroke="#c8c6c4" stroke-width="1.8" fill="none"/></svg>
<div class="t" style="left:221px;top:176.00px;font-size:13px;line-height:13px;color:#605e5c;font-weight:normal;font-style:normal;font-family:"Liberation Serif";"><i>f</i><span style="font-size:9px;font-style:italic">x</span></div>
<div class="b" style="left:250px;top:171px;width:1665px;height:40px;background:#fefefe;border:1px solid #c6c6c6"></div>
<svg class="b" style="left:1903px;top:179px;" width="8" height="5" viewBox="0 0 8 5"><path d="M0.8 4.5L4 1.3L7.2 4.5" stroke="#605e5c" stroke-width="1.4" fill="none"/></svg>
<div class="b" style="left:1902px;top:223px;width:15px;height:15px;background:#fff;border:1px solid #ababab"></div>
<svg class="b" style="left:1906px;top:228px;" width="8" height="5" viewBox="0 0 8 5"><path d="M0 5L4 1L8 5Z" fill="#605e5c"/></svg>
<div class="b" style="left:1902px;top:238px;width:15px;height:713px;background:#fff;border:1px solid #ababab"></div>
<div class="b" style="left:1903px;top:951px;width:13px;height:24px;background:#dadada"></div>
<div class="b" style="left:1902px;top:975px;width:15px;height:15px;background:#fff;border:1px solid #ababab"></div>
<svg class="b" style="left:1906px;top:980px;" width="8" height="5" viewBox="0 0 8 5"><path d="M0 0L4 4L8 0Z" fill="#605e5c"/></svg>
<div class="t" style="left:2px;top:226.39px;font-size:13.6px;line-height:13.6px;color:#000;font-weight:bold;font-style:normal;">Resultados Globais Mensais</div>
<div class="b" style="left:1px;top:277px;width:278px;height:90px;background:#d9e1f2"></div>
<div class="b" style="left:1px;top:367px;width:278px;height:1px;background:#8ea9db"></div>
<div class="t" style="left:2px;top:281.67px;font-size:12.2px;line-height:12.2px;color:#000;font-weight:normal;font-style:normal;">Gama Produto</div>
<div class="t" style="left:188px;top:281.67px;font-size:12.2px;line-height:12.2px;color:#000;font-weight:normal;font-style:normal;">(All)</div>
<div class="b" style="left:261px;top:278px;width:18px;height:17px;background:linear-gradient(#fff,#eef1f5);border:1px solid #a6a6a6"></div>
<svg class="b" style="left:266px;top:284px;" width="8" height="5" viewBox="0 0 8 5"><path d="M0 0H8L4 4.5Z" fill="#595959"/></svg>
<div class="t" style="left:281px;top:282.35px;font-size:11.4px;line-height:11.4px;color:#b8b8b8;font-weight:normal;font-style:italic;">&lt;&lt;&lt; Selecionar Gamas pretendidas</div>
<div class="t" style="left:2px;top:299.67px;font-size:12.2px;line-height:12.2px;color:#000;font-weight:normal;font-style:normal;">Marca</div>
<div class="t" style="left:188px;top:299.67px;font-size:12.2px;line-height:12.2px;color:#000;font-weight:normal;font-style:normal;">(All)</div>
<div class="b" style="left:261px;top:296px;width:18px;height:17px;background:linear-gradient(#fff,#eef1f5);border:1px solid #a6a6a6"></div>
<svg class="b" style="left:266px;top:302px;" width="8" height="5" viewBox="0 0 8 5"><path d="M0 0H8L4 4.5Z" fill="#595959"/></svg>
<div class="t" style="left:281px;top:300.35px;font-size:11.4px;line-height:11.4px;color:#b8b8b8;font-weight:normal;font-style:italic;">&lt;&lt;&lt; Selecionar Marcas pretendidas</div>
<div class="t" style="left:2px;top:317.67px;font-size:12.2px;line-height:12.2px;color:#000;font-weight:normal;font-style:normal;">Nome Produto</div>
<div class="t" style="left:188px;top:317.67px;font-size:12.2px;line-height:12.2px;color:#000;font-weight:normal;font-style:normal;">(All)</div>
<div class="b" style="left:261px;top:314px;width:18px;height:17px;background:linear-gradient(#fff,#eef1f5);border:1px solid #a6a6a6"></div>
<svg class="b" style="left:266px;top:320px;" width="8" height="5" viewBox="0 0 8 5"><path d="M0 0H8L4 4.5Z" fill="#595959"/></svg>
<div class="t" style="left:281px;top:318.35px;font-size:11.4px;line-height:11.4px;color:#b8b8b8;font-weight:normal;font-style:italic;">&lt;&lt;&lt; Selecionar Produtos pretendidos</div>
<div class="t" style="left:2px;top:335.67px;font-size:12.2px;line-height:12.2px;color:#000;font-weight:normal;font-style:normal;">Região</div>
<div class="t" style="left:188px;top:335.67px;font-size:12.2px;line-height:12.2px;color:#000;font-weight:normal;font-style:normal;">(All)</div>
<div class="b" style="left:261px;top:332px;width:18px;height:17px;background:linear-gradient(#fff,#eef1f5);border:1px solid #a6a6a6"></div>
<svg class="b" style="left:266px;top:338px;" width="8" height="5" viewBox="0 0 8 5"><path d="M0 0H8L4 4.5Z" fill="#595959"/></svg>
<div class="t" style="left:281px;top:336.35px;font-size:11.4px;line-height:11.4px;color:#b8b8b8;font-weight:normal;font-style:italic;">&lt;&lt;&lt; Selecionar Regiões pretendidos</div>
<div class="t" style="left:2px;top:353.67px;font-size:12.2px;line-height:12.2px;color:#000;font-weight:normal;font-style:normal;">Nome Cliente</div>
<div class="t" style="left:188px;top:353.67px;font-size:12.2px;line-height:12.2px;color:#000;font-weight:normal;font-style:normal;">(All)</div>
<div class="b" style="left:261px;top:350px;width:18px;height:17px;background:linear-gradient(#fff,#eef1f5);border:1px solid #a6a6a6"></div>
<svg class="b" style="left:266px;top:356px;" width="8" height="5" viewBox="0 0 8 5"><path d="M0 0H8L4 4.5Z" fill="#595959"/></svg>
<div class="t" style="left:281px;top:354.35px;font-size:11.4px;line-height:11.4px;color:#b8b8b8;font-weight:normal;font-style:italic;">&lt;&lt;&lt; Selecionar Clientes pretendidos</div>
<div class="b" style="left:1px;top:385px;width:1382px;height:36px;background:#d9e1f2"></div>
<div class="t" style="left:2px;top:390.27px;font-size:11.5px;line-height:11.5px;color:#000;font-weight:bold;font-style:normal;">Sum of Valor</div>
<div class="t" style="left:188px;top:390.27px;width:73px;overflow:hidden;font-size:11.5px;line-height:11.5px;font-weight:bold;color:#000">Column Labels</div>
<div class="b" style="left:261px;top:386px;width:18px;height:17px;background:linear-gradient(#fff,#eef1f5);border:1px solid #a6a6a6"></div>
<svg class="b" style="left:266px;top:392px;" width="8" height="5" viewBox="0 0 8 5"><path d="M0 0H8L4 4.5Z" fill="#595959"/></svg>
<div class="t" style="left:2px;top:408.27px;font-size:11.5px;line-height:11.5px;color:#000;font-weight:bold;font-style:normal;">Row Labels</div>
<div class="b" style="left:168px;top:404px;width:18px;height:17px;background:linear-gradient(#fff,#eef1f5);border:1px solid #a6a6a6"></div>
<svg class="b" style="left:173px;top:410px;" width="8" height="5" viewBox="0 0 8 5"><path d="M0 0H8L4 4.5Z" fill="#595959"/></svg>
<div class="t" style="right:1644px;top:408.27px;font-size:11.5px;line-height:11.5px;color:#000;font-weight:bold;font-style:normal;">1</div>
<div class="t" style="right:1552px;top:408.27px;font-size:11.5px;line-height:11.5px;color:#000;font-weight:bold;font-style:normal;">2</div>
<div class="t" style="right:1460px;top:408.27px;font-size:11.5px;line-height:11.5px;color:#000;font-weight:bold;font-style:normal;">3</div>
<div class="t" style="right:1368px;top:408.27px;font-size:11.5px;line-height:11.5px;color:#000;font-weight:bold;font-style:normal;">4</div>
<div class="t" style="right:1276px;top:408.27px;font-size:11.5px;line-height:11.5px;color:#000;font-weight:bold;font-style:normal;">5</div>
<div class="t" style="right:1184px;top:408.27px;font-size:11.5px;line-height:11.5px;color:#000;font-weight:bold;font-style:normal;">6</div>
<div class="t" style="right:1092px;top:408.27px;font-size:11.5px;line-height:11.5px;color:#000;font-weight:bold;font-style:normal;">7</div>
<div class="t" style="right:1000px;top:408.27px;font-size:11.5px;line-height:11.5px;color:#000;font-weight:bold;font-style:normal;">8</div>
<div class="t" style="right:908px;top:408.27px;font-size:11.5px;line-height:11.5px;color:#000;font-weight:bold;font-style:normal;">9</div>
<div class="t" style="right:816px;top:408.27px;font-size:11.5px;line-height:11.5px;color:#000;font-weight:bold;font-style:normal;">10</div>
<div class="t" style="right:724px;top:408.27px;font-size:11.5px;line-height:11.5px;color:#000;font-weight:bold;font-style:normal;">11</div>
<div class="t" style="right:632px;top:408.27px;font-size:11.5px;line-height:11.5px;color:#000;font-weight:bold;font-style:normal;">12</div>
<div class="t" style="left:1293px;top:408.27px;font-size:11.5px;line-height:11.5px;color:#000;font-weight:bold;font-style:normal;">Grand Total</div>
<div class="b" style="left:1px;top:421px;width:1897px;height:1px;background:#a6a6a6"></div>
<svg class="b" style="left:5px;top:426px;" width="9" height="9" viewBox="0 0 9 9"><rect x="0.5" y="0.5" width="8" height="8" rx="1" fill="#eef1f6" stroke="#9aa4b3"/><path d="M2 4.5H7" stroke="#404a58" stroke-width="1.2"/></svg>
<div class="t" style="left:16px;top:426.27px;font-size:11.5px;line-height:11.5px;color:#000;font-weight:bold;font-style:normal;">Y01</div>
<div class="b" style="left:1px;top:439px;width:1382px;height:1px;background:#8ea9db"></div>
<div class="t" style="left:33px;top:443.67px;font-size:12.2px;line-height:12.2px;color:#000;font-weight:normal;font-style:normal;">a) Unidades Vendidas</div>
<div class="t" style="right:1644px;top:443.67px;font-size:12.2px;line-height:12.2px;color:#000;font-weight:normal;font-style:normal;">224,156</div>
<div class="t" style="right:1552px;top:443.67px;font-size:12.2px;line-height:12.2px;color:#000;font-weight:normal;font-style:normal;">253,392</div>
<div class="t" style="right:1460px;top:443.67px;font-size:12.2px;line-height:12.2px;color:#000;font-weight:normal;font-style:normal;">255,262</div>
<div class="t" style="right:1368px;top:443.67px;font-size:12.2px;line-height:12.2px;color:#000;font-weight:normal;font-style:normal;">257,394</div>
<div class="t" style="right:1276px;top:443.67px;font-size:12.2px;line-height:12.2px;color:#000;font-weight:normal;font-style:normal;">258,524</div>
<div class="t" style="right:1184px;top:443.67px;font-size:12.2px;line-height:12.2px;color:#000;font-weight:normal;font-style:normal;">293,004</div>
<div class="t" style="right:1092px;top:443.67px;font-size:12.2px;line-height:12.2px;color:#000;font-weight:normal;font-style:normal;">302,232</div>
<div class="t" style="right:1000px;top:443.67px;font-size:12.2px;line-height:12.2px;color:#000;font-weight:normal;font-style:normal;">189,770</div>
<div class="t" style="right:908px;top:443.67px;font-size:12.2px;line-height:12.2px;color:#000;font-weight:normal;font-style:normal;">300,708</div>
<div class="t" style="right:816px;top:443.67px;font-size:12.2px;line-height:12.2px;color:#000;font-weight:normal;font-style:normal;">280,296</div>
<div class="t" style="right:724px;top:443.67px;font-size:12.2px;line-height:12.2px;color:#000;font-weight:normal;font-style:normal;">282,784</div>
<div class="t" style="right:632px;top:443.67px;font-size:12.2px;line-height:12.2px;color:#000;font-weight:normal;font-style:normal;">253,392</div>
<div class="t" style="right:540px;top:443.67px;font-size:12.2px;line-height:12.2px;color:#000;font-weight:normal;font-style:normal;">3,150,914</div>
<div class="t" style="left:33px;top:461.67px;font-size:12.2px;line-height:12.2px;color:#000;font-weight:normal;font-style:normal;">b) Vendas Gross</div>
<div class="t" style="right:1644px;top:461.67px;font-size:12.2px;line-height:12.2px;color:#000;font-weight:normal;font-style:normal;">1,235,191</div>
<div class="t" style="right:1552px;top:461.67px;font-size:12.2px;line-height:12.2px;color:#000;font-weight:normal;font-style:normal;">1,381,403</div>
<div class="t" style="right:1460px;top:461.67px;font-size:12.2px;line-height:12.2px;color:#000;font-weight:normal;font-style:normal;">1,398,923</div>
<div class="t" style="right:1368px;top:461.67px;font-size:12.2px;line-height:12.2px;color:#000;font-weight:normal;font-style:normal;">1,391,308</div>
<div class="t" style="right:1276px;top:461.67px;font-size:12.2px;line-height:12.2px;color:#000;font-weight:normal;font-style:normal;">1,437,233</div>
<div class="t" style="right:1184px;top:461.67px;font-size:12.2px;line-height:12.2px;color:#000;font-weight:normal;font-style:normal;">1,497,510</div>
<div class="t" style="right:1092px;top:461.67px;font-size:12.2px;line-height:12.2px;color:#000;font-weight:normal;font-style:normal;">1,704,899</div>
<div class="t" style="right:1000px;top:461.67px;font-size:12.2px;line-height:12.2px;color:#000;font-weight:normal;font-style:normal;">1,031,209</div>
<div class="t" style="right:908px;top:461.67px;font-size:12.2px;line-height:12.2px;color:#000;font-weight:normal;font-style:normal;">1,686,428</div>
<div class="t" style="right:816px;top:461.67px;font-size:12.2px;line-height:12.2px;color:#000;font-weight:normal;font-style:normal;">1,479,076</div>
<div class="t" style="right:724px;top:461.67px;font-size:12.2px;line-height:12.2px;color:#000;font-weight:normal;font-style:normal;">1,439,621</div>
<div class="t" style="right:632px;top:461.67px;font-size:12.2px;line-height:12.2px;color:#000;font-weight:normal;font-style:normal;">1,381,403</div>
<div class="t" style="right:540px;top:461.67px;font-size:12.2px;line-height:12.2px;color:#000;font-weight:normal;font-style:normal;">17,064,204</div>
<div class="t" style="left:33px;top:479.67px;font-size:12.2px;line-height:12.2px;color:#000;font-weight:normal;font-style:normal;">c) Descontos e Promos</div>
<div class="t" style="right:1644px;top:479.67px;font-size:12.2px;line-height:12.2px;color:#000;font-weight:normal;font-style:normal;">56,049</div>
<div class="t" style="right:1552px;top:479.67px;font-size:12.2px;line-height:12.2px;color:#000;font-weight:normal;font-style:normal;">56,054</div>
<div class="t" style="right:1460px;top:479.67px;font-size:12.2px;line-height:12.2px;color:#000;font-weight:normal;font-style:normal;">56,050</div>
<div class="t" style="right:1368px;top:479.67px;font-size:12.2px;line-height:12.2px;color:#000;font-weight:normal;font-style:normal;">60,697</div>
<div class="t" style="right:1276px;top:479.67px;font-size:12.2px;line-height:12.2px;color:#000;font-weight:normal;font-style:normal;">60,846</div>
<div class="t" style="right:1184px;top:479.67px;font-size:12.2px;line-height:12.2px;color:#000;font-weight:normal;font-style:normal;">60,844</div>
<div class="t" style="right:1092px;top:479.67px;font-size:12.2px;line-height:12.2px;color:#000;font-weight:normal;font-style:normal;">60,850</div>
<div class="t" style="right:1000px;top:479.67px;font-size:12.2px;line-height:12.2px;color:#000;font-weight:normal;font-style:normal;">60,856</div>
<div class="t" style="right:908px;top:479.67px;font-size:12.2px;line-height:12.2px;color:#000;font-weight:normal;font-style:normal;">60,846</div>
<div class="t" style="right:816px;top:479.67px;font-size:12.2px;line-height:12.2px;color:#000;font-weight:normal;font-style:normal;">60,850</div>
<div class="t" style="right:724px;top:479.67px;font-size:12.2px;line-height:12.2px;color:#000;font-weight:normal;font-style:normal;">60,852</div>
<div class="t" style="right:632px;top:479.67px;font-size:12.2px;line-height:12.2px;color:#000;font-weight:normal;font-style:normal;">56,054</div>
<div class="t" style="right:540px;top:479.67px;font-size:12.2px;line-height:12.2px;color:#000;font-weight:normal;font-style:normal;">710,848</div>
<div class="t" style="left:33px;top:497.67px;font-size:12.2px;line-height:12.2px;color:#000;font-weight:normal;font-style:normal;">d) Vendas Net</div>
<div class="t" style="right:1644px;top:497.67px;font-size:12.2px;line-height:12.2px;color:#000;font-weight:normal;font-style:normal;">1,179,142</div>
<div class="t" style="right:1552px;top:497.67px;font-size:12.2px;line-height:12.2px;color:#000;font-weight:normal;font-style:normal;">1,325,349</div>
<div class="t" style="right:1460px;top:497.67px;font-size:12.2px;line-height:12.2px;color:#000;font-weight:normal;font-style:normal;">1,342,873</div>
<div class="t" style="right:1368px;top:497.67px;font-size:12.2px;line-height:12.2px;color:#000;font-weight:normal;font-style:normal;">1,330,610</div>
<div class="t" style="right:1276px;top:497.67px;font-size:12.2px;line-height:12.2px;color:#000;font-weight:normal;font-style:normal;">1,376,387</div>
<div class="t" style="right:1184px;top:497.67px;font-size:12.2px;line-height:12.2px;color:#000;font-weight:normal;font-style:normal;">1,436,666</div>
<div class="t" style="right:1092px;top:497.67px;font-size:12.2px;line-height:12.2px;color:#000;font-weight:normal;font-style:normal;">1,644,049</div>
<div class="t" style="right:1000px;top:497.67px;font-size:12.2px;line-height:12.2px;color:#000;font-weight:normal;font-style:normal;">970,353</div>
<div class="t" style="right:908px;top:497.67px;font-size:12.2px;line-height:12.2px;color:#000;font-weight:normal;font-style:normal;">1,625,582</div>
<div class="t" style="right:816px;top:497.67px;font-size:12.2px;line-height:12.2px;color:#000;font-weight:normal;font-style:normal;">1,418,226</div>
<div class="t" style="right:724px;top:497.67px;font-size:12.2px;line-height:12.2px;color:#000;font-weight:normal;font-style:normal;">1,378,769</div>
<div class="t" style="right:632px;top:497.67px;font-size:12.2px;line-height:12.2px;color:#000;font-weight:normal;font-style:normal;">1,325,349</div>
<div class="t" style="right:540px;top:497.67px;font-size:12.2px;line-height:12.2px;color:#000;font-weight:normal;font-style:normal;">16,353,356</div>
<div class="t" style="left:33px;top:515.67px;font-size:12.2px;line-height:12.2px;color:#000;font-weight:normal;font-style:normal;">e) Custo da Mercadoria</div>
<div class="t" style="right:1644px;top:515.67px;font-size:12.2px;line-height:12.2px;color:#000;font-weight:normal;font-style:normal;">468,029</div>
<div class="t" style="right:1552px;top:515.67px;font-size:12.2px;line-height:12.2px;color:#000;font-weight:normal;font-style:normal;">508,547</div>
<div class="t" style="right:1460px;top:515.67px;font-size:12.2px;line-height:12.2px;color:#000;font-weight:normal;font-style:normal;">569,707</div>
<div class="t" style="right:1368px;top:515.67px;font-size:12.2px;line-height:12.2px;color:#000;font-weight:normal;font-style:normal;">535,280</div>
<div class="t" style="right:1276px;top:515.67px;font-size:12.2px;line-height:12.2px;color:#000;font-weight:normal;font-style:normal;">563,451</div>
<div class="t" style="right:1184px;top:515.67px;font-size:12.2px;line-height:12.2px;color:#000;font-weight:normal;font-style:normal;">617,035</div>
<div class="t" style="right:1092px;top:515.67px;font-size:12.2px;line-height:12.2px;color:#000;font-weight:normal;font-style:normal;">646,582</div>
<div class="t" style="right:1000px;top:515.67px;font-size:12.2px;line-height:12.2px;color:#000;font-weight:normal;font-style:normal;">405,209</div>
<div class="t" style="right:908px;top:515.67px;font-size:12.2px;line-height:12.2px;color:#000;font-weight:normal;font-style:normal;">613,655</div>
<div class="t" style="right:816px;top:515.67px;font-size:12.2px;line-height:12.2px;color:#000;font-weight:normal;font-style:normal;">565,806</div>
<div class="t" style="right:724px;top:515.67px;font-size:12.2px;line-height:12.2px;color:#000;font-weight:normal;font-style:normal;">534,803</div>
<div class="t" style="right:632px;top:515.67px;font-size:12.2px;line-height:12.2px;color:#000;font-weight:normal;font-style:normal;">508,547</div>
<div class="t" style="right:540px;top:515.67px;font-size:12.2px;line-height:12.2px;color:#000;font-weight:normal;font-style:normal;">6,536,650</div>
<div class="t" style="left:33px;top:533.67px;font-size:12.2px;line-height:12.2px;color:#000;font-weight:normal;font-style:normal;">f) Margem Gross</div>
<div class="t" style="right:1644px;top:533.67px;font-size:12.2px;line-height:12.2px;color:#000;font-weight:normal;font-style:normal;">711,113</div>
<div class="t" style="right:1552px;top:533.67px;font-size:12.2px;line-height:12.2px;color:#000;font-weight:normal;font-style:normal;">816,802</div>
<div class="t" style="right:1460px;top:533.67px;font-size:12.2px;line-height:12.2px;color:#000;font-weight:normal;font-style:normal;">773,166</div>
<div class="t" style="right:1368px;top:533.67px;font-size:12.2px;line-height:12.2px;color:#000;font-weight:normal;font-style:normal;">795,330</div>
<div class="t" style="right:1276px;top:533.67px;font-size:12.2px;line-height:12.2px;color:#000;font-weight:normal;font-style:normal;">812,936</div>
<div class="t" style="right:1184px;top:533.67px;font-size:12.2px;line-height:12.2px;color:#000;font-weight:normal;font-style:normal;">819,631</div>
<div class="t" style="right:1092px;top:533.67px;font-size:12.2px;line-height:12.2px;color:#000;font-weight:normal;font-style:normal;">997,467</div>
<div class="t" style="right:1000px;top:533.67px;font-size:12.2px;line-height:12.2px;color:#000;font-weight:normal;font-style:normal;">565,144</div>
<div class="t" style="right:908px;top:533.67px;font-size:12.2px;line-height:12.2px;color:#000;font-weight:normal;font-style:normal;">1,011,927</div>
<div class="t" style="right:816px;top:533.67px;font-size:12.2px;line-height:12.2px;color:#000;font-weight:normal;font-style:normal;">852,420</div>
<div class="t" style="right:724px;top:533.67px;font-size:12.2px;line-height:12.2px;color:#000;font-weight:normal;font-style:normal;">843,966</div>
<div class="t" style="right:632px;top:533.67px;font-size:12.2px;line-height:12.2px;color:#000;font-weight:normal;font-style:normal;">816,802</div>
<div class="t" style="right:540px;top:533.67px;font-size:12.2px;line-height:12.2px;color:#000;font-weight:normal;font-style:normal;">9,816,706</div>
<div class="t" style="left:33px;top:551.67px;font-size:12.2px;line-height:12.2px;color:#000;font-weight:normal;font-style:normal;">g) Custos de Distribuição</div>
<div class="t" style="right:1644px;top:551.67px;font-size:12.2px;line-height:12.2px;color:#000;font-weight:normal;font-style:normal;">15,116</div>
<div class="t" style="right:1552px;top:551.67px;font-size:12.2px;line-height:12.2px;color:#000;font-weight:normal;font-style:normal;">15,352</div>
<div class="t" style="right:1460px;top:551.67px;font-size:12.2px;line-height:12.2px;color:#000;font-weight:normal;font-style:normal;">17,246</div>
<div class="t" style="right:1368px;top:551.67px;font-size:12.2px;line-height:12.2px;color:#000;font-weight:normal;font-style:normal;">20,480</div>
<div class="t" style="right:1276px;top:551.67px;font-size:12.2px;line-height:12.2px;color:#000;font-weight:normal;font-style:normal;">18,725</div>
<div class="t" style="right:1184px;top:551.67px;font-size:12.2px;line-height:12.2px;color:#000;font-weight:normal;font-style:normal;">19,621</div>
<div class="t" style="right:1092px;top:551.67px;font-size:12.2px;line-height:12.2px;color:#000;font-weight:normal;font-style:normal;">21,998</div>
<div class="t" style="right:1000px;top:551.67px;font-size:12.2px;line-height:12.2px;color:#000;font-weight:normal;font-style:normal;">14,015</div>
<div class="t" style="right:908px;top:551.67px;font-size:12.2px;line-height:12.2px;color:#000;font-weight:normal;font-style:normal;">20,515</div>
<div class="t" style="right:816px;top:551.67px;font-size:12.2px;line-height:12.2px;color:#000;font-weight:normal;font-style:normal;">25,067</div>
<div class="t" style="right:724px;top:551.67px;font-size:12.2px;line-height:12.2px;color:#000;font-weight:normal;font-style:normal;">19,585</div>
<div class="t" style="right:632px;top:551.67px;font-size:12.2px;line-height:12.2px;color:#000;font-weight:normal;font-style:normal;">15,352</div>
<div class="t" style="right:540px;top:551.67px;font-size:12.2px;line-height:12.2px;color:#000;font-weight:normal;font-style:normal;">223,072</div>
<div class="t" style="left:33px;top:569.67px;font-size:12.2px;line-height:12.2px;color:#000;font-weight:normal;font-style:normal;">h) Custos Comerciais</div>
<div class="t" style="right:1644px;top:569.67px;font-size:12.2px;line-height:12.2px;color:#000;font-weight:normal;font-style:normal;">246,772</div>
<div class="t" style="right:1552px;top:569.67px;font-size:12.2px;line-height:12.2px;color:#000;font-weight:normal;font-style:normal;">242,648</div>
<div class="t" style="right:1460px;top:569.67px;font-size:12.2px;line-height:12.2px;color:#000;font-weight:normal;font-style:normal;">307,753</div>
<div class="t" style="right:1368px;top:569.67px;font-size:12.2px;line-height:12.2px;color:#000;font-weight:normal;font-style:normal;">283,267</div>
<div class="t" style="right:1276px;top:569.67px;font-size:12.2px;line-height:12.2px;color:#000;font-weight:normal;font-style:normal;">234,864</div>
<div class="t" style="right:1184px;top:569.67px;font-size:12.2px;line-height:12.2px;color:#000;font-weight:normal;font-style:normal;">262,567</div>
<div class="t" style="right:1092px;top:569.67px;font-size:12.2px;line-height:12.2px;color:#000;font-weight:normal;font-style:normal;">322,130</div>
<div class="t" style="right:1000px;top:569.67px;font-size:12.2px;line-height:12.2px;color:#000;font-weight:normal;font-style:normal;">239,616</div>
<div class="t" style="right:908px;top:569.67px;font-size:12.2px;line-height:12.2px;color:#000;font-weight:normal;font-style:normal;">270,634</div>
<div class="t" style="right:816px;top:569.67px;font-size:12.2px;line-height:12.2px;color:#000;font-weight:normal;font-style:normal;">242,615</div>
<div class="t" style="right:724px;top:569.67px;font-size:12.2px;line-height:12.2px;color:#000;font-weight:normal;font-style:normal;">262,622</div>
<div class="t" style="right:632px;top:569.67px;font-size:12.2px;line-height:12.2px;color:#000;font-weight:normal;font-style:normal;">242,648</div>
<div class="t" style="right:540px;top:569.67px;font-size:12.2px;line-height:12.2px;color:#000;font-weight:normal;font-style:normal;">3,158,137</div>
<div class="t" style="left:33px;top:587.67px;font-size:12.2px;line-height:12.2px;color:#000;font-weight:normal;font-style:normal;">i) Outros Custos Diretos</div>
<div class="t" style="right:1644px;top:587.67px;font-size:12.2px;line-height:12.2px;color:#000;font-weight:normal;font-style:normal;">150,273</div>
<div class="t" style="right:1552px;top:587.67px;font-size:12.2px;line-height:12.2px;color:#000;font-weight:normal;font-style:normal;">157,303</div>
<div class="t" style="right:1460px;top:587.67px;font-size:12.2px;line-height:12.2px;color:#000;font-weight:normal;font-style:normal;">146,666</div>
<div class="t" style="right:1368px;top:587.67px;font-size:12.2px;line-height:12.2px;color:#000;font-weight:normal;font-style:normal;">151,941</div>
<div class="t" style="right:1276px;top:587.67px;font-size:12.2px;line-height:12.2px;color:#000;font-weight:normal;font-style:normal;">191,044</div>
<div class="t" style="right:1184px;top:587.67px;font-size:12.2px;line-height:12.2px;color:#000;font-weight:normal;font-style:normal;">157,810</div>
<div class="t" style="right:1092px;top:587.67px;font-size:12.2px;line-height:12.2px;color:#000;font-weight:normal;font-style:normal;">206,846</div>
<div class="t" style="right:1000px;top:587.67px;font-size:12.2px;line-height:12.2px;color:#000;font-weight:normal;font-style:normal;">169,833</div>
<div class="t" style="right:908px;top:587.67px;font-size:12.2px;line-height:12.2px;color:#000;font-weight:normal;font-style:normal;">177,839</div>
<div class="t" style="right:816px;top:587.67px;font-size:12.2px;line-height:12.2px;color:#000;font-weight:normal;font-style:normal;">160,402</div>
<div class="t" style="right:724px;top:587.67px;font-size:12.2px;line-height:12.2px;color:#000;font-weight:normal;font-style:normal;">155,646</div>
<div class="t" style="right:632px;top:587.67px;font-size:12.2px;line-height:12.2px;color:#000;font-weight:normal;font-style:normal;">157,303</div>
<div class="t" style="right:540px;top:587.67px;font-size:12.2px;line-height:12.2px;color:#000;font-weight:normal;font-style:normal;">1,982,906</div>
<div class="t" style="left:33px;top:605.67px;font-size:12.2px;line-height:12.2px;color:#000;font-weight:normal;font-style:normal;">j) Margem Net</div>
<div class="t" style="right:1644px;top:605.67px;font-size:12.2px;line-height:12.2px;color:#000;font-weight:normal;font-style:normal;">298,951</div>
<div class="t" style="right:1552px;top:605.67px;font-size:12.2px;line-height:12.2px;color:#000;font-weight:normal;font-style:normal;">401,500</div>
<div class="t" style="right:1460px;top:605.67px;font-size:12.2px;line-height:12.2px;color:#000;font-weight:normal;font-style:normal;">301,500</div>
<div class="t" style="right:1368px;top:605.67px;font-size:12.2px;line-height:12.2px;color:#000;font-weight:normal;font-style:normal;">339,642</div>
<div class="t" style="right:1276px;top:605.67px;font-size:12.2px;line-height:12.2px;color:#000;font-weight:normal;font-style:normal;">368,303</div>
<div class="t" style="right:1184px;top:605.67px;font-size:12.2px;line-height:12.2px;color:#000;font-weight:normal;font-style:normal;">379,633</div>
<div class="t" style="right:1092px;top:605.67px;font-size:12.2px;line-height:12.2px;color:#000;font-weight:normal;font-style:normal;">446,492</div>
<div class="t" style="right:1000px;top:605.67px;font-size:12.2px;line-height:12.2px;color:#000;font-weight:normal;font-style:normal;">141,680</div>
<div class="t" style="right:908px;top:605.67px;font-size:12.2px;line-height:12.2px;color:#000;font-weight:normal;font-style:normal;">542,940</div>
<div class="t" style="right:816px;top:605.67px;font-size:12.2px;line-height:12.2px;color:#000;font-weight:normal;font-style:normal;">424,336</div>
<div class="t" style="right:724px;top:605.67px;font-size:12.2px;line-height:12.2px;color:#000;font-weight:normal;font-style:normal;">406,113</div>
<div class="t" style="right:632px;top:605.67px;font-size:12.2px;line-height:12.2px;color:#000;font-weight:normal;font-style:normal;">401,500</div>
<div class="t" style="right:540px;top:605.67px;font-size:12.2px;line-height:12.2px;color:#000;font-weight:normal;font-style:normal;">4,452,591</div>
<svg class="b" style="left:5px;top:624px;" width="9" height="9" viewBox="0 0 9 9"><rect x="0.5" y="0.5" width="8" height="8" rx="1" fill="#eef1f6" stroke="#9aa4b3"/><path d="M2 4.5H7" stroke="#404a58" stroke-width="1.2"/></svg>
<div class="t" style="left:16px;top:624.27px;font-size:11.5px;line-height:11.5px;color:#000;font-weight:bold;font-style:normal;">Y02</div>
<div class="b" style="left:1px;top:637px;width:1382px;height:1px;background:#8ea9db"></div>
<div class="t" style="left:33px;top:641.67px;font-size:12.2px;line-height:12.2px;color:#000;font-weight:normal;font-style:normal;">a) Unidades Vendidas</div>
<div class="t" style="right:1644px;top:641.67px;font-size:12.2px;line-height:12.2px;color:#000;font-weight:normal;font-style:normal;">268,320</div>
<div class="t" style="right:1552px;top:641.67px;font-size:12.2px;line-height:12.2px;color:#000;font-weight:normal;font-style:normal;">269,668</div>
<div class="t" style="right:1460px;top:641.67px;font-size:12.2px;line-height:12.2px;color:#000;font-weight:normal;font-style:normal;">269,178</div>
<div class="t" style="right:1368px;top:641.67px;font-size:12.2px;line-height:12.2px;color:#000;font-weight:normal;font-style:normal;">300,248</div>
<div class="t" style="right:1276px;top:641.67px;font-size:12.2px;line-height:12.2px;color:#000;font-weight:normal;font-style:normal;">291,604</div>
<div class="t" style="right:1184px;top:641.67px;font-size:12.2px;line-height:12.2px;color:#000;font-weight:normal;font-style:normal;">322,414</div>
<div class="t" style="right:1092px;top:641.67px;font-size:12.2px;line-height:12.2px;color:#000;font-weight:normal;font-style:normal;">312,840</div>
<div class="t" style="right:1000px;top:641.67px;font-size:12.2px;line-height:12.2px;color:#000;font-weight:normal;font-style:normal;">250,642</div>
<div class="t" style="right:908px;top:641.67px;font-size:12.2px;line-height:12.2px;color:#000;font-weight:normal;font-style:normal;">304,800</div>
<div class="t" style="right:816px;top:641.67px;font-size:12.2px;line-height:12.2px;color:#000;font-weight:normal;font-style:normal;">323,068</div>
<div class="t" style="right:724px;top:641.67px;font-size:12.2px;line-height:12.2px;color:#000;font-weight:normal;font-style:normal;">277,632</div>
<div class="t" style="right:632px;top:641.67px;font-size:12.2px;line-height:12.2px;color:#000;font-weight:normal;font-style:normal;">214,344</div>
<div class="t" style="right:540px;top:641.67px;font-size:12.2px;line-height:12.2px;color:#000;font-weight:normal;font-style:normal;">3,404,758</div>
<div class="t" style="left:33px;top:659.67px;font-size:12.2px;line-height:12.2px;color:#000;font-weight:normal;font-style:normal;">b) Vendas Gross</div>
<div class="t" style="right:1644px;top:659.67px;font-size:12.2px;line-height:12.2px;color:#000;font-weight:normal;font-style:normal;">1,270,914</div>
<div class="t" style="right:1552px;top:659.67px;font-size:12.2px;line-height:12.2px;color:#000;font-weight:normal;font-style:normal;">1,436,415</div>
<div class="t" style="right:1460px;top:659.67px;font-size:12.2px;line-height:12.2px;color:#000;font-weight:normal;font-style:normal;">1,476,708</div>
<div class="t" style="right:1368px;top:659.67px;font-size:12.2px;line-height:12.2px;color:#000;font-weight:normal;font-style:normal;">1,580,376</div>
<div class="t" style="right:1276px;top:659.67px;font-size:12.2px;line-height:12.2px;color:#000;font-weight:normal;font-style:normal;">1,556,036</div>
<div class="t" style="right:1184px;top:659.67px;font-size:12.2px;line-height:12.2px;color:#000;font-weight:normal;font-style:normal;">1,595,175</div>
<div class="t" style="right:1092px;top:659.67px;font-size:12.2px;line-height:12.2px;color:#000;font-weight:normal;font-style:normal;">1,618,570</div>
<div class="t" style="right:1000px;top:659.67px;font-size:12.2px;line-height:12.2px;color:#000;font-weight:normal;font-style:normal;">1,351,349</div>
<div class="t" style="right:908px;top:659.67px;font-size:12.2px;line-height:12.2px;color:#000;font-weight:normal;font-style:normal;">1,528,984</div>
<div class="t" style="right:816px;top:659.67px;font-size:12.2px;line-height:12.2px;color:#000;font-weight:normal;font-style:normal;">1,589,386</div>
<div class="t" style="right:724px;top:659.67px;font-size:12.2px;line-height:12.2px;color:#000;font-weight:normal;font-style:normal;">1,495,791</div>
<div class="t" style="right:632px;top:659.67px;font-size:12.2px;line-height:12.2px;color:#000;font-weight:normal;font-style:normal;">1,199,499</div>
<div class="t" style="right:540px;top:659.67px;font-size:12.2px;line-height:12.2px;color:#000;font-weight:normal;font-style:normal;">17,699,203</div>
<div class="t" style="left:33px;top:677.67px;font-size:12.2px;line-height:12.2px;color:#000;font-weight:normal;font-style:normal;">c) Descontos e Promos</div>
<div class="t" style="right:1644px;top:677.67px;font-size:12.2px;line-height:12.2px;color:#000;font-weight:normal;font-style:normal;">57,491</div>
<div class="t" style="right:1552px;top:677.67px;font-size:12.2px;line-height:12.2px;color:#000;font-weight:normal;font-style:normal;">57,499</div>
<div class="t" style="right:1460px;top:677.67px;font-size:12.2px;line-height:12.2px;color:#000;font-weight:normal;font-style:normal;">57,494</div>
<div class="t" style="right:1368px;top:677.67px;font-size:12.2px;line-height:12.2px;color:#000;font-weight:normal;font-style:normal;">57,492</div>
<div class="t" style="right:1276px;top:677.67px;font-size:12.2px;line-height:12.2px;color:#000;font-weight:normal;font-style:normal;">57,493</div>
<div class="t" style="right:1184px;top:677.67px;font-size:12.2px;line-height:12.2px;color:#000;font-weight:normal;font-style:normal;">57,496</div>
<div class="t" style="right:1092px;top:677.67px;font-size:12.2px;line-height:12.2px;color:#000;font-weight:normal;font-style:normal;">57,494</div>
<div class="t" style="right:1000px;top:677.67px;font-size:12.2px;line-height:12.2px;color:#000;font-weight:normal;font-style:normal;">57,496</div>
<div class="t" style="right:908px;top:677.67px;font-size:12.2px;line-height:12.2px;color:#000;font-weight:normal;font-style:normal;">107,150</div>
<div class="t" style="right:816px;top:677.67px;font-size:12.2px;line-height:12.2px;color:#000;font-weight:normal;font-style:normal;">62,136</div>
<div class="t" style="right:724px;top:677.67px;font-size:12.2px;line-height:12.2px;color:#000;font-weight:normal;font-style:normal;">62,140</div>
<div class="t" style="right:632px;top:677.67px;font-size:12.2px;line-height:12.2px;color:#000;font-weight:normal;font-style:normal;">59,827</div>
<div class="t" style="right:540px;top:677.67px;font-size:12.2px;line-height:12.2px;color:#000;font-weight:normal;font-style:normal;">751,209</div>
<div class="t" style="left:33px;top:695.67px;font-size:12.2px;line-height:12.2px;color:#000;font-weight:normal;font-style:normal;">d) Vendas Net</div>
<div class="t" style="right:1644px;top:695.67px;font-size:12.2px;line-height:12.2px;color:#000;font-weight:normal;font-style:normal;">1,213,423</div>
<div class="t" style="right:1552px;top:695.67px;font-size:12.2px;line-height:12.2px;color:#000;font-weight:normal;font-style:normal;">1,378,916</div>
<div class="t" style="right:1460px;top:695.67px;font-size:12.2px;line-height:12.2px;color:#000;font-weight:normal;font-style:normal;">1,419,214</div>
<div class="t" style="right:1368px;top:695.67px;font-size:12.2px;line-height:12.2px;color:#000;font-weight:normal;font-style:normal;">1,522,883</div>
<div class="t" style="right:1276px;top:695.67px;font-size:12.2px;line-height:12.2px;color:#000;font-weight:normal;font-style:normal;">1,498,544</div>
<div class="t" style="right:1184px;top:695.67px;font-size:12.2px;line-height:12.2px;color:#000;font-weight:normal;font-style:normal;">1,537,679</div>
<div class="t" style="right:1092px;top:695.67px;font-size:12.2px;line-height:12.2px;color:#000;font-weight:normal;font-style:normal;">1,561,076</div>
<div class="t" style="right:1000px;top:695.67px;font-size:12.2px;line-height:12.2px;color:#000;font-weight:normal;font-style:normal;">1,293,853</div>
<div class="t" style="right:908px;top:695.67px;font-size:12.2px;line-height:12.2px;color:#000;font-weight:normal;font-style:normal;">1,421,834</div>
<div class="t" style="right:816px;top:695.67px;font-size:12.2px;line-height:12.2px;color:#000;font-weight:normal;font-style:normal;">1,527,250</div>
<div class="t" style="right:724px;top:695.67px;font-size:12.2px;line-height:12.2px;color:#000;font-weight:normal;font-style:normal;">1,433,651</div>
<div class="t" style="right:632px;top:695.67px;font-size:12.2px;line-height:12.2px;color:#000;font-weight:normal;font-style:normal;">1,139,673</div>
<div class="t" style="right:540px;top:695.67px;font-size:12.2px;line-height:12.2px;color:#000;font-weight:normal;font-style:normal;">16,947,994</div>
<div class="t" style="left:33px;top:713.67px;font-size:12.2px;line-height:12.2px;color:#000;font-weight:normal;font-style:normal;">e) Custo da Mercadoria</div>
<div class="t" style="right:1644px;top:713.67px;font-size:12.2px;line-height:12.2px;color:#000;font-weight:normal;font-style:normal;">468,004</div>
<div class="t" style="right:1552px;top:713.67px;font-size:12.2px;line-height:12.2px;color:#000;font-weight:normal;font-style:normal;">577,879</div>
<div class="t" style="right:1460px;top:713.67px;font-size:12.2px;line-height:12.2px;color:#000;font-weight:normal;font-style:normal;">549,828</div>
<div class="t" style="right:1368px;top:713.67px;font-size:12.2px;line-height:12.2px;color:#000;font-weight:normal;font-style:normal;">724,888</div>
<div class="t" style="right:1276px;top:713.67px;font-size:12.2px;line-height:12.2px;color:#000;font-weight:normal;font-style:normal;">593,832</div>
<div class="t" style="right:1184px;top:713.67px;font-size:12.2px;line-height:12.2px;color:#000;font-weight:normal;font-style:normal;">711,307</div>
<div class="t" style="right:1092px;top:713.67px;font-size:12.2px;line-height:12.2px;color:#000;font-weight:normal;font-style:normal;">605,538</div>
<div class="t" style="right:1000px;top:713.67px;font-size:12.2px;line-height:12.2px;color:#000;font-weight:normal;font-style:normal;">506,468</div>
<div class="t" style="right:908px;top:713.67px;font-size:12.2px;line-height:12.2px;color:#000;font-weight:normal;font-style:normal;">573,741</div>
<div class="t" style="right:816px;top:713.67px;font-size:12.2px;line-height:12.2px;color:#000;font-weight:normal;font-style:normal;">601,723</div>
<div class="t" style="right:724px;top:713.67px;font-size:12.2px;line-height:12.2px;color:#000;font-weight:normal;font-style:normal;">594,401</div>
<div class="t" style="right:632px;top:713.67px;font-size:12.2px;line-height:12.2px;color:#000;font-weight:normal;font-style:normal;">484,243</div>
<div class="t" style="right:540px;top:713.67px;font-size:12.2px;line-height:12.2px;color:#000;font-weight:normal;font-style:normal;">6,991,852</div>
<div class="t" style="left:33px;top:731.67px;font-size:12.2px;line-height:12.2px;color:#000;font-weight:normal;font-style:normal;">f) Margem Gross</div>
<div class="t" style="right:1644px;top:731.67px;font-size:12.2px;line-height:12.2px;color:#000;font-weight:normal;font-style:normal;">745,418</div>
<div class="t" style="right:1552px;top:731.67px;font-size:12.2px;line-height:12.2px;color:#000;font-weight:normal;font-style:normal;">801,038</div>
<div class="t" style="right:1460px;top:731.67px;font-size:12.2px;line-height:12.2px;color:#000;font-weight:normal;font-style:normal;">869,386</div>
<div class="t" style="right:1368px;top:731.67px;font-size:12.2px;line-height:12.2px;color:#000;font-weight:normal;font-style:normal;">797,996</div>
<div class="t" style="right:1276px;top:731.67px;font-size:12.2px;line-height:12.2px;color:#000;font-weight:normal;font-style:normal;">904,712</div>
<div class="t" style="right:1184px;top:731.67px;font-size:12.2px;line-height:12.2px;color:#000;font-weight:normal;font-style:normal;">826,372</div>
<div class="t" style="right:1092px;top:731.67px;font-size:12.2px;line-height:12.2px;color:#000;font-weight:normal;font-style:normal;">955,537</div>
<div class="t" style="right:1000px;top:731.67px;font-size:12.2px;line-height:12.2px;color:#000;font-weight:normal;font-style:normal;">787,385</div>
<div class="t" style="right:908px;top:731.67px;font-size:12.2px;line-height:12.2px;color:#000;font-weight:normal;font-style:normal;">848,093</div>
<div class="t" style="right:816px;top:731.67px;font-size:12.2px;line-height:12.2px;color:#000;font-weight:normal;font-style:normal;">925,526</div>
<div class="t" style="right:724px;top:731.67px;font-size:12.2px;line-height:12.2px;color:#000;font-weight:normal;font-style:normal;">839,250</div>
<div class="t" style="right:632px;top:731.67px;font-size:12.2px;line-height:12.2px;color:#000;font-weight:normal;font-style:normal;">655,430</div>
<div class="t" style="right:540px;top:731.67px;font-size:12.2px;line-height:12.2px;color:#000;font-weight:normal;font-style:normal;">9,956,142</div>
<div class="t" style="left:33px;top:749.67px;font-size:12.2px;line-height:12.2px;color:#000;font-weight:normal;font-style:normal;">g) Custos de Distribuição</div>
<div class="t" style="right:1644px;top:749.67px;font-size:12.2px;line-height:12.2px;color:#000;font-weight:normal;font-style:normal;">14,430</div>
<div class="t" style="right:1552px;top:749.67px;font-size:12.2px;line-height:12.2px;color:#000;font-weight:normal;font-style:normal;">26,909</div>
<div class="t" style="right:1460px;top:749.67px;font-size:12.2px;line-height:12.2px;color:#000;font-weight:normal;font-style:normal;">15,883</div>
<div class="t" style="right:1368px;top:749.67px;font-size:12.2px;line-height:12.2px;color:#000;font-weight:normal;font-style:normal;">23,061</div>
<div class="t" style="right:1276px;top:749.67px;font-size:12.2px;line-height:12.2px;color:#000;font-weight:normal;font-style:normal;">21,708</div>
<div class="t" style="right:1184px;top:749.67px;font-size:12.2px;line-height:12.2px;color:#000;font-weight:normal;font-style:normal;">23,185</div>
<div class="t" style="right:1092px;top:749.67px;font-size:12.2px;line-height:12.2px;color:#000;font-weight:normal;font-style:normal;">27,520</div>
<div class="t" style="right:1000px;top:749.67px;font-size:12.2px;line-height:12.2px;color:#000;font-weight:normal;font-style:normal;">17,703</div>
<div class="t" style="right:908px;top:749.67px;font-size:12.2px;line-height:12.2px;color:#000;font-weight:normal;font-style:normal;">22,683</div>
<div class="t" style="right:816px;top:749.67px;font-size:12.2px;line-height:12.2px;color:#000;font-weight:normal;font-style:normal;">22,853</div>
<div class="t" style="right:724px;top:749.67px;font-size:12.2px;line-height:12.2px;color:#000;font-weight:normal;font-style:normal;">20,146</div>
<div class="t" style="right:632px;top:749.67px;font-size:12.2px;line-height:12.2px;color:#000;font-weight:normal;font-style:normal;">24,006</div>
<div class="t" style="right:540px;top:749.67px;font-size:12.2px;line-height:12.2px;color:#000;font-weight:normal;font-style:normal;">260,089</div>
<div class="t" style="left:33px;top:767.67px;font-size:12.2px;line-height:12.2px;color:#000;font-weight:normal;font-style:normal;">h) Custos Comerciais</div>
<div class="t" style="right:1644px;top:767.67px;font-size:12.2px;line-height:12.2px;color:#000;font-weight:normal;font-style:normal;">247,735</div>
<div class="t" style="right:1552px;top:767.67px;font-size:12.2px;line-height:12.2px;color:#000;font-weight:normal;font-style:normal;">256,596</div>
<div class="t" style="right:1460px;top:767.67px;font-size:12.2px;line-height:12.2px;color:#000;font-weight:normal;font-style:normal;">239,169</div>
<div class="t" style="right:1368px;top:767.67px;font-size:12.2px;line-height:12.2px;color:#000;font-weight:normal;font-style:normal;">258,957</div>
<div class="t" style="right:1276px;top:767.67px;font-size:12.2px;line-height:12.2px;color:#000;font-weight:normal;font-style:normal;">248,049</div>
<div class="t" style="right:1184px;top:767.67px;font-size:12.2px;line-height:12.2px;color:#000;font-weight:normal;font-style:normal;">255,600</div>
<div class="t" style="right:1092px;top:767.67px;font-size:12.2px;line-height:12.2px;color:#000;font-weight:normal;font-style:normal;">261,482</div>
<div class="t" style="right:1000px;top:767.67px;font-size:12.2px;line-height:12.2px;color:#000;font-weight:normal;font-style:normal;">241,137</div>
<div class="t" style="right:908px;top:767.67px;font-size:12.2px;line-height:12.2px;color:#000;font-weight:normal;font-style:normal;">241,617</div>
<div class="t" style="right:816px;top:767.67px;font-size:12.2px;line-height:12.2px;color:#000;font-weight:normal;font-style:normal;">250,878</div>
<div class="t" style="right:724px;top:767.67px;font-size:12.2px;line-height:12.2px;color:#000;font-weight:normal;font-style:normal;">360,973</div>
<div class="t" style="right:632px;top:767.67px;font-size:12.2px;line-height:12.2px;color:#000;font-weight:normal;font-style:normal;">262,656</div>
<div class="t" style="right:540px;top:767.67px;font-size:12.2px;line-height:12.2px;color:#000;font-weight:normal;font-style:normal;">3,124,849</div>
<div class="t" style="left:33px;top:785.67px;font-size:12.2px;line-height:12.2px;color:#000;font-weight:normal;font-style:normal;">i) Outros Custos Diretos</div>
<div class="t" style="right:1644px;top:785.67px;font-size:12.2px;line-height:12.2px;color:#000;font-weight:normal;font-style:normal;">137,099</div>
<div class="t" style="right:1552px;top:785.67px;font-size:12.2px;line-height:12.2px;color:#000;font-weight:normal;font-style:normal;">136,323</div>
<div class="t" style="right:1460px;top:785.67px;font-size:12.2px;line-height:12.2px;color:#000;font-weight:normal;font-style:normal;">173,737</div>
<div class="t" style="right:1368px;top:785.67px;font-size:12.2px;line-height:12.2px;color:#000;font-weight:normal;font-style:normal;">142,573</div>
<div class="t" style="right:1276px;top:785.67px;font-size:12.2px;line-height:12.2px;color:#000;font-weight:normal;font-style:normal;">176,258</div>
<div class="t" style="right:1184px;top:785.67px;font-size:12.2px;line-height:12.2px;color:#000;font-weight:normal;font-style:normal;">104,692</div>
<div class="t" style="right:1092px;top:785.67px;font-size:12.2px;line-height:12.2px;color:#000;font-weight:normal;font-style:normal;">166,094</div>
<div class="t" style="right:1000px;top:785.67px;font-size:12.2px;line-height:12.2px;color:#000;font-weight:normal;font-style:normal;">166,444</div>
<div class="t" style="right:908px;top:785.67px;font-size:12.2px;line-height:12.2px;color:#000;font-weight:normal;font-style:normal;">181,082</div>
<div class="t" style="right:816px;top:785.67px;font-size:12.2px;line-height:12.2px;color:#000;font-weight:normal;font-style:normal;">167,987</div>
<div class="t" style="right:724px;top:785.67px;font-size:12.2px;line-height:12.2px;color:#000;font-weight:normal;font-style:normal;">89,419</div>
<div class="t" style="right:632px;top:785.67px;font-size:12.2px;line-height:12.2px;color:#000;font-weight:normal;font-style:normal;">128,010</div>
<div class="t" style="right:540px;top:785.67px;font-size:12.2px;line-height:12.2px;color:#000;font-weight:normal;font-style:normal;">1,769,716</div>
<div class="t" style="left:33px;top:803.67px;font-size:12.2px;line-height:12.2px;color:#000;font-weight:normal;font-style:normal;">j) Margem Net</div>
<div class="t" style="right:1644px;top:803.67px;font-size:12.2px;line-height:12.2px;color:#000;font-weight:normal;font-style:normal;">346,155</div>
<div class="t" style="right:1552px;top:803.67px;font-size:12.2px;line-height:12.2px;color:#000;font-weight:normal;font-style:normal;">381,209</div>
<div class="t" style="right:1460px;top:803.67px;font-size:12.2px;line-height:12.2px;color:#000;font-weight:normal;font-style:normal;">440,596</div>
<div class="t" style="right:1368px;top:803.67px;font-size:12.2px;line-height:12.2px;color:#000;font-weight:normal;font-style:normal;">373,405</div>
<div class="t" style="right:1276px;top:803.67px;font-size:12.2px;line-height:12.2px;color:#000;font-weight:normal;font-style:normal;">458,695</div>
<div class="t" style="right:1184px;top:803.67px;font-size:12.2px;line-height:12.2px;color:#000;font-weight:normal;font-style:normal;">442,895</div>
<div class="t" style="right:1092px;top:803.67px;font-size:12.2px;line-height:12.2px;color:#000;font-weight:normal;font-style:normal;">500,442</div>
<div class="t" style="right:1000px;top:803.67px;font-size:12.2px;line-height:12.2px;color:#000;font-weight:normal;font-style:normal;">362,100</div>
<div class="t" style="right:908px;top:803.67px;font-size:12.2px;line-height:12.2px;color:#000;font-weight:normal;font-style:normal;">402,711</div>
<div class="t" style="right:816px;top:803.67px;font-size:12.2px;line-height:12.2px;color:#000;font-weight:normal;font-style:normal;">483,808</div>
<div class="t" style="right:724px;top:803.67px;font-size:12.2px;line-height:12.2px;color:#000;font-weight:normal;font-style:normal;">368,713</div>
<div class="t" style="right:632px;top:803.67px;font-size:12.2px;line-height:12.2px;color:#000;font-weight:normal;font-style:normal;">240,758</div>
<div class="t" style="right:540px;top:803.67px;font-size:12.2px;line-height:12.2px;color:#000;font-weight:normal;font-style:normal;">4,801,487</div>
<div class="b" style="left:277px;top:942px;width:95px;height:21px;border:2px solid #217346"></div>
<div class="b" style="left:368px;top:959px;width:6px;height:6px;background:#217346;border:1px solid #fff"></div>
<svg class="b" style="left:25px;top:1000px;" width="5" height="9" viewBox="0 0 5 9"><path d="M5 0V9L0 4.5Z" fill="#c8c6c4"/></svg>
<svg class="b" style="left:55px;top:1000px;" width="5" height="9" viewBox="0 0 5 9"><path d="M0 0V9L5 4.5Z" fill="#c8c6c4"/></svg>
<div class="b" style="left:100px;top:994px;width:1px;height:20px;background:#8a8886"></div>
<div class="t" style="left:112px;top:997.00px;font-size:13px;line-height:13px;color:#323130;font-weight:normal;font-style:normal;">Notas</div>
<div class="b" style="left:160px;top:994px;width:1px;height:20px;background:#8a8886"></div>
<div class="b" style="left:163px;top:993px;width:74px;height:22px;background:#548235"></div>
<div class="t" style="left:173px;top:998.01px;font-size:11.8px;line-height:11.8px;color:#fff;font-weight:normal;font-style:normal;">DB_Cubo</div>
<div class="b" style="left:239px;top:990px;width:118px;height:26px;background:#fff;border:1px solid #c6c6c6;border-top:none"></div>
<div class="b" style="left:239px;top:1013px;width:118px;height:2px;background:#217346"></div>
<div class="t" style="left:251px;top:997.00px;font-size:13px;line-height:13px;color:#217346;font-weight:bold;font-style:normal;">Demo Report 1</div>
<div class="t" style="left:369px;top:997.00px;font-size:13px;line-height:13px;color:#323130;font-weight:normal;font-style:normal;">Demo Report 2</div>
<div class="b" style="left:473px;top:994px;width:1px;height:20px;background:#8a8886"></div>
<div class="t" style="left:486px;top:997.00px;font-size:13px;line-height:13px;color:#323130;font-weight:normal;font-style:normal;">Demo Report 3</div>
<div class="b" style="left:590px;top:994px;width:1px;height:20px;background:#8a8886"></div>
<div class="t" style="left:603px;top:997.00px;font-size:13px;line-height:13px;color:#323130;font-weight:normal;font-style:normal;">Demo Report 4</div>
<div class="b" style="left:706px;top:994px;width:1px;height:20px;background:#8a8886"></div>
<svg class="b" style="left:739px;top:995px;" width="17" height="17" viewBox="0 0 17 17"><circle cx="8.5" cy="8.5" r="7.7" fill="none" stroke="#605e5c" stroke-width="1.1"/><path d="M8.5 4.5V12.5M4.5 8.5H12.5" stroke="#605e5c" stroke-width="1.1"/></svg>
<div class="b" style="left:1152px;top:999px;width:2px;height:2px;background:#a6a6a6"></div>
<div class="b" style="left:1152px;top:1003px;width:2px;height:2px;background:#a6a6a6"></div>
<div class="b" style="left:1152px;top:1007px;width:2px;height:2px;background:#a6a6a6"></div>
<div class="b" style="left:1169px;top:997px;width:15px;height:15px;background:#fff;border:1px solid #ababab"></div>
<svg class="b" style="left:1174px;top:1000px;" width="5" height="8" viewBox="0 0 5 8"><path d="M5 0V8L0 4Z" fill="#605e5c"/></svg>
<div class="b" style="left:1184px;top:997px;width:665px;height:15px;background:#fff;border:1px solid #ababab"></div>
<div class="b" style="left:1850px;top:998px;width:30px;height:13px;background:#dadada"></div>
<div class="b" style="left:1881px;top:997px;width:15px;height:15px;background:#fff;border:1px solid #ababab"></div>
<svg class="b" style="left:1887px;top:1001px;" width="5" height="8" viewBox="0 0 5 8"><path d="M0 0V8L5 4Z" fill="#605e5c"/></svg>
<div class="t" style="left:7px;top:1024.56px;font-size:10.8px;line-height:10.8px;color:#323130;font-weight:normal;font-style:normal;">Ready</div>
<svg class="b" style="left:1501px;top:1022px;" width="17" height="14" viewBox="0 0 17 14"><path d="M0.6 0.6H15.4V9H8 M0.6 0.6V9H6 M4 12H8" fill="none" stroke="#444" stroke-width="1.1"/><circle cx="11" cy="10" r="2.5" fill="none" stroke="#444" stroke-width="1.3" stroke-dasharray="1.2 0.8"/></svg>
<div class="t" style="left:1519.5px;top:1024.18px;font-size:11.6px;line-height:11.6px;color:#323130;font-weight:normal;font-style:normal;">Display Settings</div>
<div class="b" style="left:1620px;top:1019px;width:40px;height:21px;background:#d2d0ce"></div>
<svg class="b" style="left:1632px;top:1022px;" width="15" height="14" viewBox="0 0 15 14"><path d="M0.5 0.5H14.5V13.5H0.5Z M0.5 4.8H14.5 M0.5 9.2H14.5 M5.2 0.5V13.5 M9.8 0.5V13.5" fill="none" stroke="#444" stroke-width="1"/></svg>
<svg class="b" style="left:1672px;top:1022px;" width="15" height="14" viewBox="0 0 15 14"><path d="M0.5 0.5H14.5V13.5H0.5Z" fill="none" stroke="#444"/><path d="M3.5 3.5H11.5V10.5H3.5Z M5 5.5H10 M5 7.5H10" fill="none" stroke="#444" stroke-width="0.9"/></svg>
<svg class="b" style="left:1713px;top:1022px;" width="15" height="14" viewBox="0 0 15 14"><path d="M0.5 0.5H14.5V13.5H0.5Z M3.5 0.5V7.5H8.5V0.5" fill="none" stroke="#444" stroke-width="1"/></svg>
<div class="b" style="left:1745px;top:1029px;width:9px;height:1px;background:#444"></div>
<div class="b" style="left:1760px;top:1029px;width:98px;height:1px;background:#a19f9d"></div>
<div class="b" style="left:1807px;top:1023px;width:4px;height:12px;background:#605e5c"></div>
<svg class="b" style="left:1863px;top:1024px;" width="10" height="10" viewBox="0 0 10 10"><path d="M5 0.5V9.5M0.5 5H9.5" stroke="#444" stroke-width="1.1"/></svg>
<div class="t" style="left:1885px;top:1025.03px;font-size:10.6px;line-height:10.6px;color:#444;font-weight:normal;font-style:normal;">100%</div>
<div class="b" style="left:685px;top:1040px;width:46px;height:40px;background:rgba(255,255,255,0.13)"></div>
<div class="b" style="left:346px;top:1078px;width:40px;height:2px;background:#76b9ed"></div>
<div class="b" style="left:493px;top:1078px;width:39px;height:2px;background:#76b9ed"></div>
<div class="b" style="left:685px;top:1078px;width:46px;height:2px;background:#76b9ed"></div>
<div class="b" style="left:738px;top:1078px;width:40px;height:2px;background:#76b9ed"></div>
<div class="b" style="left:836px;top:1078px;width:40px;height:2px;background:#76b9ed"></div>
<div class="b" style="left:885px;top:1078px;width:40px;height:2px;background:#76b9ed"></div>
<div class="b" style="left:934px;top:1078px;width:40px;height:2px;background:#76b9ed"></div>
<svg class="b" style="left:16px;top:1052px;" width="17" height="16" viewBox="0 0 17 16"><path d="M0 2.3L6.8 1.3V7.5H0Z M7.8 1.1L17 0V7.5H7.8Z M0 8.5H6.8V14.7L0 13.7Z M7.8 8.5H17V16L7.8 14.9Z" fill="#fff"/></svg>
<svg class="b" style="left:63px;top:1051px;" width="18" height="18" viewBox="0 0 18 18"><circle cx="10.5" cy="7.5" r="6.3" fill="none" stroke="#fff" stroke-width="1.5"/><path d="M6 12L1 17" stroke="#fff" stroke-width="1.8"/></svg>
<svg class="b" style="left:110px;top:1050px;" width="20" height="20" viewBox="0 0 20 20"><circle cx="10" cy="10" r="7.3" fill="none" stroke="#fff" stroke-width="1.9"/></svg>
<svg class="b" style="left:159px;top:1051px;" width="18" height="18" viewBox="0 0 18 18"><path d="M1 2H12 M1 6H12 M1 10H12 M1 14H12 M1 6V10 M12 6V10 M15.5 1V4 M15.5 6V16" fill="none" stroke="#fff" stroke-width="1.3"/></svg>
<svg class="b" style="left:209px;top:1050px;" width="22" height="20" viewBox="0 0 22 20"><path d="M1 14L12 3L21 10L10 18Z" fill="#dbe8f0" stroke="#9ab" stroke-width="0.8"/><path d="M1 14L10 18V20L1 16Z" fill="#6a8090"/></svg>
<svg class="b" style="left:255px;top:1047px;" width="26" height="26" viewBox="0 0 26 26"><rect x="1" y="1" width="24" height="24" rx="2" fill="#f5b620"/><path d="M7 5L21 13L7 21" fill="none" stroke="#fff" stroke-width="1.8"/><path d="M7 21L15 9" stroke="#fff" stroke-width="1.5"/></svg>
<svg class="b" style="left:304px;top:1047px;" width="26" height="26" viewBox="0 0 26 26"><circle cx="13" cy="13" r="12" fill="#1e9ce6"/><text x="13" y="19" text-anchor="middle" font-size="17" font-weight="bold" fill="#fff" font-family="Liberation Sans">S</text></svg>
<svg class="b" style="left:352px;top:1047px;" width="28" height="26" viewBox="0 0 28 26"><rect x="9" y="1" width="18" height="24" rx="2" fill="#2b7cd3"/><rect x="9" y="7" width="18" height="6" fill="#41a5ee"/><rect x="9" y="13" width="18" height="6" fill="#2b7cd3"/><rect x="9" y="19" width="18" height="6" rx="1" fill="#103f91"/><rect x="1" y="6" width="14" height="14" rx="1.5" fill="#185abd"/><text x="8" y="17" text-anchor="middle" font-size="10" font-weight="bold" fill="#fff" font-family="Liberation Sans">W</text></svg>
<svg class="b" style="left:400px;top:1047px;" width="28" height="26" viewBox="0 0 28 26"><circle cx="14" cy="6" r="4.5" fill="#4fa3e8"/><circle cx="5.5" cy="9" r="3.5" fill="#2b88d8"/><circle cx="22.5" cy="9" r="3.5" fill="#2b88d8"/><path d="M6 25C6 15 22 15 22 25Z" fill="#4fa3e8"/><path d="M0 23C0 14 11 14 11 18V23Z M28 23C28 14 17 14 17 18V23Z" fill="#2b88d8"/></svg>
<svg class="b" style="left:450px;top:1047px;" width="26" height="26" viewBox="0 0 26 26"><path d="M2 7H24V25H2Z" fill="#e8eef2"/><path d="M8 7V4C8 1 18 1 18 4V7" fill="none" stroke="#dde" stroke-width="1.6"/><rect x="8" y="11" width="4.5" height="4.5" fill="#f25022"/><rect x="13.5" y="11" width="4.5" height="4.5" fill="#7fba00"/><rect x="8" y="16.5" width="4.5" height="4.5" fill="#00a4ef"/><rect x="13.5" y="16.5" width="4.5" height="4.5" fill="#ffb900"/></svg>
<svg class="b" style="left:499px;top:1047px;" width="26" height="26" viewBox="0 0 26 26"><defs><linearGradient id="eg" x1="1" y1="0" x2="0" y2="1"><stop offset="0" stop-color="#6ee79a"/><stop offset="0.45" stop-color="#1ba8e0"/><stop offset="1" stop-color="#0a4f9c"/></linearGradient></defs><circle cx="13" cy="13" r="12" fill="url(#eg)"/><path d="M6 15C6 9 12 7 16 9C19 10.5 19 13.5 17 14.5C15.5 15.3 12 15 11 14C11 18 15 21 20 20C17 24 10 24.5 6.5 21C5 19.5 6 17 6 15Z" fill="#0d3f7a"/><path d="M11 14C12 15.5 16 16 18 14.5" fill="none" stroke="#4fd0a0" stroke-width="1"/></svg>
<svg class="b" style="left:548px;top:1047px;" width="26" height="26" viewBox="0 0 26 26"><circle cx="13" cy="13" r="12" fill="#db4437"/><path d="M13 13L2.6 19A12 12 0 0 0 19 23.4Z" fill="#0f9d58"/><path d="M13 13L19 23.4A12 12 0 0 0 23.4 7H13Z" fill="#ffcd40"/><path d="M13 13L2.6 19A12 12 0 0 1 3 6.5L13 7Z" fill="#0f9d58" opacity="0"/><path d="M2.6 19A12 12 0 0 1 4.5 4.5L13 13Z" fill="#0f9d58"/><circle cx="13" cy="13" r="5.5" fill="#fff"/><circle cx="13" cy="13" r="4.3" fill="#4285f4"/></svg>
<svg class="b" style="left:596px;top:1048px;" width="28" height="24" viewBox="0 0 28 24"><path d="M1 3H10L12 5H27V22H1Z" fill="#e8a93a"/><path d="M1 8H27V22H1Z" fill="#ffc83d"/><rect x="9" y="14" width="10" height="3" fill="#2b7cd3"/></svg>
<svg class="b" style="left:646px;top:1047px;" width="26" height="27" viewBox="0 0 26 27"><rect x="1" y="3" width="24" height="23" rx="2" fill="#2b7cd3"/><rect x="1" y="3" width="24" height="5" fill="#5ea0ef"/><path d="M6 1V5M20 1V5" stroke="#fff" stroke-width="1.5"/><text x="13" y="22" text-anchor="middle" font-size="12" fill="#fff" font-family="Liberation Sans">19</text></svg>
<svg class="b" style="left:695px;top:1047px;" width="28" height="26" viewBox="0 0 28 26"><rect x="9" y="1" width="18" height="24" rx="2" fill="#21a366"/><rect x="9" y="1" width="9" height="8" fill="#33c481"/><rect x="18" y="9" width="9" height="8" fill="#107c41"/><rect x="9" y="17" width="18" height="8" rx="1" fill="#185c37"/><rect x="1" y="6" width="14" height="14" rx="1.5" fill="#107c41"/><text x="8" y="17" text-anchor="middle" font-size="10" font-weight="bold" fill="#fff" font-family="Liberation Sans">X</text></svg>
<svg class="b" style="left:744px;top:1047px;" width="28" height="27" viewBox="0 0 28 27"><rect x="9" y="1" width="17" height="15" fill="#0364b8"/><rect x="17" y="1" width="9" height="7" fill="#28a8ea"/><path d="M10 14H27V26H10Z" fill="#f1c27d"/><path d="M10 14L18.5 21L27 14" fill="none" stroke="#fff" stroke-width="1"/><rect x="1" y="6" width="14" height="14" rx="1.5" fill="#0078d4"/><text x="8" y="17" text-anchor="middle" font-size="10" font-weight="bold" fill="#fff" font-family="Liberation Sans">O</text></svg>
<svg class="b" style="left:793px;top:1047px;" width="28" height="26" viewBox="0 0 28 26"><circle cx="16" cy="13" r="12" fill="#ed6c47"/><path d="M16 1A12 12 0 0 1 28 13H16Z" fill="#ff8f6b"/><rect x="1" y="6" width="14" height="14" rx="1.5" fill="#c43e1c"/><text x="8" y="17" text-anchor="middle" font-size="10" font-weight="bold" fill="#fff" font-family="Liberation Sans">P</text></svg>
<svg class="b" style="left:842px;top:1047px;" width="26" height="26" viewBox="0 0 26 26"><circle cx="13" cy="13" r="12" fill="#1ed760"/><path d="M6 9.5C10 8 16 8 20.5 10.5 M7 13.5C10.5 12.3 15 12.5 19 14.5 M7.8 17C11 16 14 16.3 17.5 18" fill="none" stroke="#121212" stroke-width="2" stroke-linecap="round"/></svg>
<svg class="b" style="left:892px;top:1047px;" width="26" height="26" viewBox="0 0 26 26"><circle cx="13" cy="13" r="12" fill="#db4437"/><path d="M13 13L2.6 19A12 12 0 0 0 19 23.4Z" fill="#0f9d58"/><path d="M13 13L19 23.4A12 12 0 0 0 23.4 7H13Z" fill="#ffcd40"/><path d="M13 13L2.6 19A12 12 0 0 1 3 6.5L13 7Z" fill="#0f9d58" opacity="0"/><path d="M2.6 19A12 12 0 0 1 4.5 4.5L13 13Z" fill="#0f9d58"/><circle cx="13" cy="13" r="5.5" fill="#fff"/><circle cx="13" cy="13" r="4.3" fill="#4285f4"/></svg>
<svg class="b" style="left:904px;top:1059px;" width="14" height="14" viewBox="0 0 14 14"><circle cx="7" cy="7" r="6.5" fill="#5a6a78" stroke="#1f3342"/><circle cx="7" cy="5.5" r="2.8" fill="#d6b39a"/><path d="M2 12C3 8 11 8 12 12Z" fill="#e6e6e6"/></svg>
<svg class="b" style="left:941px;top:1047px;" width="26" height="26" viewBox="0 0 26 26"><rect x="1" y="1" width="24" height="24" rx="2" fill="#5a5833"/><path d="M6 5L20 13L6 21" fill="none" stroke="#8d8a62" stroke-width="1.8"/><path d="M6 21L14 9" stroke="#8d8a62" stroke-width="1.5"/></svg>
<div class="t" style="left:1874px;top:1045.27px;font-size:11.5px;line-height:11.5px;color:#fff;font-weight:normal;font-style:normal;">14:59</div>
<div class="t" style="left:1860px;top:1063.27px;font-size:11.5px;line-height:11.5px;color:#fff;font-weight:normal;font-style:normal;">23-Jun-21</div>
</body></html>
